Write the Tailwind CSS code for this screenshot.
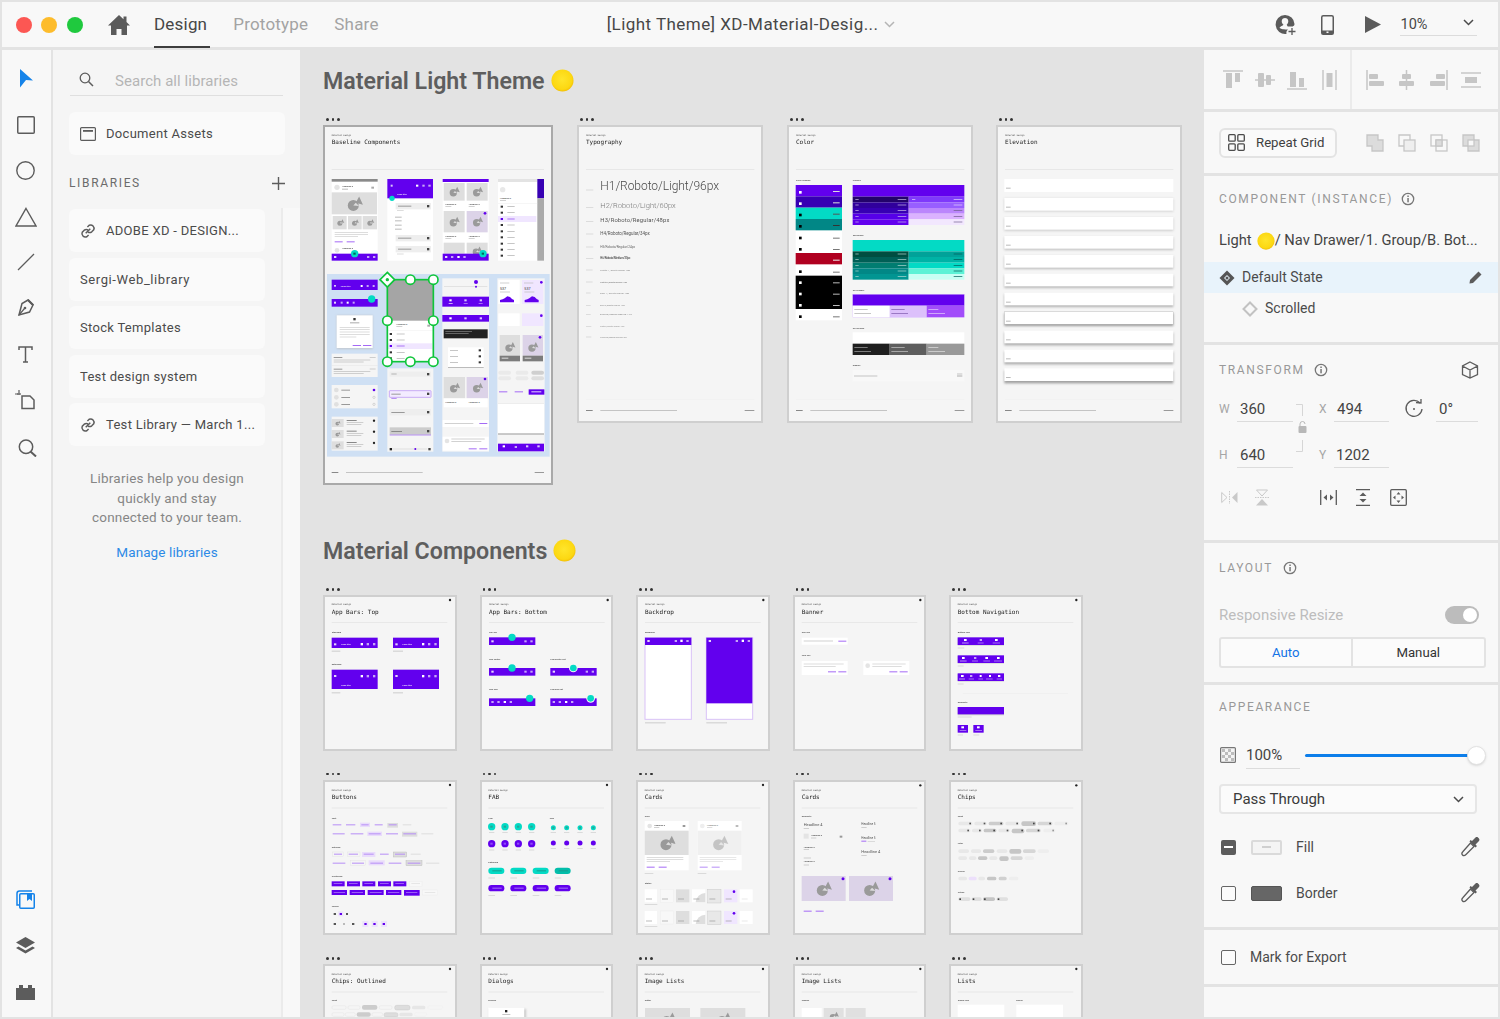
<!DOCTYPE html>
<html>
<head>
<meta charset="utf-8" />
<title>XD Material Design</title>
<script src="https://cdn.jsdelivr.net/npm/@tailwindcss/browser@4"></script>
</head>
<body class="m-0">

<!-- shared shapes for the artboard thumbnails -->
<svg class="absolute w-0 h-0">
  <defs>
    <radialGradient id="coin" cx="48%" cy="45%" r="60%">
      <stop offset="0" stop-color="#ffe52b" /><stop offset="0.75" stop-color="#fcd812" /><stop offset="1" stop-color="#efb400" />
    </radialGradient>
    <filter id="soft" x="-10%" y="-30%" width="120%" height="160%"><feGaussianBlur stdDeviation="2.5" /></filter>
    <symbol id="pic" viewBox="0 0 64 64">
      <circle cx="29" cy="38" r="16" fill="#9a9a9a" /><path d="M36 30 46 12 57 36z" fill="#9a9a9a" /><path d="M29 38 36 30 46 40z" fill="#dcdcdc" />
    </symbol>
    <symbol id="dropper" viewBox="0 0 20 20">
      <path d="M10.500 6 14 9.500 6 17.500c-1 1-2.500 1.500-3.500.5s-.5-2.500.5-3.500z" fill="none" stroke="#5c5c5c" stroke-width="1.300" />
      <path d="M9.500 4.500 15.500 10.500 17 9 15.500 7.500 19 4c1-1.500 0-2.500-.5-3s-1.500-1.500-3-.5L12 4 10.500 3z" fill="#5c5c5c" />
    </symbol>
    <symbol id="info" viewBox="0 0 14 14">
      <circle cx="7" cy="7" r="5.700" fill="none" stroke="#777" stroke-width="1.300" /><rect x="6.300" y="6" width="1.500" height="4.300" fill="#777" /><rect x="6.300" y="3.500" width="1.500" height="1.500" fill="#777" />
    </symbol>
    <symbol id="link" viewBox="1 1 14 14">
      <path d="M6 10 10 6M7.500 4.500l1.500-1.500a3 3 0 0 1 4 4l-1.700 1.700a3 3 0 0 1-3.300.3M8.500 11.500l-1.500 1.500a3 3 0 0 1-4-4l1.700-1.700a3 3 0 0 1 3.300-.3" fill="none" stroke="#5c5c5c" stroke-width="1.300" />
    </symbol>
  </defs>
</svg>

<div class="w-[1500px] h-[1019px] overflow-hidden bg-[#e3e3e3] p-[2px] flex flex-col font-['Roboto',sans-serif] text-[#4b4b4b]">

  <!-- header -->
  <header class="h-[45px] shrink-0 bg-[#f8f8f8] flex items-center pl-[14px]">
    <span class="w-4 h-4 rounded-full bg-[#fc5753]"></span>
    <span class="w-4 h-4 rounded-full bg-[#fdbc2c] ml-[9px]"></span>
    <span class="w-4 h-4 rounded-full bg-[#1fc93e] ml-[10px]"></span>
    <svg class="w-[22px] h-[20px] ml-[25px]" viewBox="0 0 22 20"><path d="M11 0 0 10.500h3V20h5.500v-6h5v6H19v-9.500h3l-3.500-3.400V1.500h-3v2.700z" fill="#5b5b5b" /></svg>
    <div class="relative h-full flex items-center text-[17px] tracking-[0.2px] ml-[24px] text-[#464646]">
      Design
      <span class="absolute left-0 right-[-3px] bottom-[-1px] h-[2px] bg-[#3d3d3d]"></span>
    </div>
    <span class="text-[17px] tracking-[0.2px] text-[#a3a3a3] ml-[26px]">Prototype</span>
    <span class="text-[17px] tracking-[0.2px] text-[#a3a3a3] ml-[26px]">Share</span>
    <span class="text-[17px] tracking-[0.45px] text-[#474747] ml-[228px]">[Light Theme] XD-Material-Desig...</span>
    <svg class="w-[11px] h-[7px] ml-[6px]" viewBox="0 0 11 7"><path d="M1 1l4.500 4.500L10 1" fill="none" stroke="#b5b5b5" stroke-width="1.500" /></svg>
    <svg class="w-[22px] h-[22px] ml-[380px]" viewBox="0 0 22 22">
      <path d="M10 1a9.500 9.500 0 1 0 1.500 18.900c-.4-2 .2-3.300 1.500-4.400-3.500 0-7.500-.3-8.500-1.700 1-2 3.200-1.500 4-3C7 9.500 6.500 8 6.800 6.500 7.300 4.700 8.500 4 10 4s2.800.7 3.200 2.500c.3 1.500-.2 3-1.500 4.300l1 1.700h5c.8-1 1.800-.5 1.800-2.500A9.500 9.500 0 0 0 10 1z" fill="#5b5b5b" />
      <path d="M17 14v7M13.500 17.500h7" stroke="#5b5b5b" stroke-width="1.300" />
    </svg>
    <svg class="w-[13px] h-[20px] ml-[24px]" viewBox="0 0 13 20"><rect x=".75" y=".75" width="11.500" height="18.500" rx="1.500" fill="none" stroke="#5b5b5b" stroke-width="1.500" /><rect x=".75" y="15.500" width="11.500" height="3.700" fill="#5b5b5b" /><rect x="5.500" y="16.500" width="2" height="1.500" fill="#f8f8f8" /></svg>
    <svg class="w-[16px] h-[17px] ml-[31px]" viewBox="0 0 16 17"><path d="M0 0 16 8.500 0 17z" fill="#5b5b5b" /></svg>
    <div class="relative w-[77px] h-[22px] ml-[19px] flex items-center text-[14.500px] text-[#474747]">
      10%
      <span class="absolute left-0 right-0 bottom-0 h-px bg-[#dcdcdc]"></span>
      <svg class="absolute right-[3px] top-[5px] w-[11px] h-[7px]" viewBox="0 0 11 7"><path d="M1 1l4.500 4.500L10 1" fill="none" stroke="#4b4b4b" stroke-width="1.500" /></svg>
    </div>
  </header>

  <div class="flex flex-1 min-h-0 mt-[3px]">

    <!-- tool rail -->
    <aside class="w-[49px] shrink-0 bg-[#f8f8f8] pr-[2px] flex flex-col items-center">
      <svg class="mt-[19px] w-[16px] h-[20px]" viewBox="0 0 16 20"><path d="M2 0 15 11.500 8 11 2 18.500z" fill="#1583e9" /></svg>
      <svg class="mt-[27px] w-[18px] h-[18px]" viewBox="0 0 18 18"><rect x=".75" y=".75" width="16.500" height="16.500" rx="1" fill="none" stroke="#5c5c5c" stroke-width="1.500" /></svg>
      <svg class="mt-[27px] w-[19px] h-[19px]" viewBox="0 0 19 19"><circle cx="9.500" cy="9.500" r="8.700" fill="none" stroke="#5c5c5c" stroke-width="1.400" /></svg>
      <svg class="mt-[27px] w-[22px] h-[20px]" viewBox="0 0 22 20"><path d="M11 1.500 21 19H1z" fill="none" stroke="#5c5c5c" stroke-width="1.400" /></svg>
      <svg class="mt-[26px] w-[18px] h-[18px]" viewBox="0 0 18 18"><path d="M1 17 17 1" stroke="#5c5c5c" stroke-width="1.300" /></svg>
      <svg class="mt-[27px] w-[19px] h-[19px]" viewBox="0 0 19 19"><path d="M12 2 17 7 13.500 14 3 17 6 5.500z" fill="none" stroke="#5c5c5c" stroke-width="1.500" /><path d="M12.500 1 18 6.500 16.500 8 11 2.500z" fill="#5c5c5c" /><path d="M3 17 8.500 10.500" stroke="#5c5c5c" stroke-width="1.200" /><circle cx="9" cy="10" r="1.300" fill="#5c5c5c" /></svg>
      <svg class="mt-[29px] w-[15px] h-[17px]" viewBox="0 0 15 17"><path d="M1 4V1h13v3M7.500 1v15M5 16h5" fill="none" stroke="#5c5c5c" stroke-width="1.500" /></svg>
      <svg class="mt-[27px] w-[21px] h-[20px]" viewBox="0 0 21 20"><path d="M7 6h8l4 4v8.500H7z" fill="none" stroke="#5c5c5c" stroke-width="1.500" /><path d="M0 4h5M4 0v3" stroke="#5c5c5c" stroke-width="1.200" /><path d="M2 4h4" stroke="#5c5c5c" stroke-width="1.200" /></svg>
      <svg class="mt-[29px] w-[19px] h-[18px] ml-[3px]" viewBox="0 0 19 18"><circle cx="8" cy="7.700" r="6.700" fill="none" stroke="#5c5c5c" stroke-width="1.500" /><path d="M12.500 12.500 18 17.500" stroke="#5c5c5c" stroke-width="2" /></svg>

      <svg class="mt-auto w-[19px] h-[19px]" viewBox="0 0 19 19"><path d="M3 15H1V3.500Q1 1 3.500 1H16" fill="none" stroke="#1583e9" stroke-width="1.500" /><rect x="3.750" y="3.750" width="14.500" height="14.500" rx="1" fill="none" stroke="#1583e9" stroke-width="1.500" /><path d="M11 4h5v7l-2.500-2L11 11z" fill="#1583e9" /></svg>
      <svg class="mt-[27px] w-[19px] h-[18px]" viewBox="0 0 19 18"><path d="M9.500 1 19 6.500 9.500 12 0 6.500z" fill="#5c5c5c" /><path d="M2.500 10.500 9.500 14.500 16.500 10.500 19 12 9.500 17.500 0 12z" fill="#5c5c5c" /></svg>
      <svg class="mt-[31px] mb-[17px] w-[19px] h-[15px]" viewBox="0 0 19 15"><path d="M0 3h3V0h4v3h5V0h4v3h3v12H0z" fill="#5c5c5c" /></svg>
    </aside>

    <!-- assets panel -->
    <aside class="w-[247px] shrink-0 ml-[2px] bg-[#f5f5f5] relative">
      <div class="absolute right-0 top-[158px] bottom-0 w-[19px] bg-[#f8f8f8] border-l-2 border-[#ebebeb]"></div>
      <div class="relative">
        <div class="mx-[17px] w-[213px] h-[46px] border-b border-[#dfdfdf] flex items-center pt-[17px] text-[15px] tracking-[0.05px] text-[#b5b5b5]">
          <svg class="w-[15px] h-[15px] ml-[9px] -mt-[3px]" viewBox="0 0 15 15"><circle cx="6" cy="6" r="4.800" fill="none" stroke="#5c5c5c" stroke-width="1.300" /><path d="M9.500 9.500 14 14" stroke="#5c5c5c" stroke-width="1.500" /></svg>
          <span class="ml-[21px]">Search all libraries</span>
        </div>
        <div class="mx-[16px] mt-[16px] h-[43px] w-[216px] rounded-md bg-[#fafafa] flex items-center pl-[11px] pt-px text-[13px] tracking-[0.3px]">
          <svg class="w-[16px] h-[14px]" viewBox="0 0 16 14"><rect x=".6" y=".6" width="14.800" height="12.800" rx="1" fill="none" stroke="#5c5c5c" stroke-width="1.200" /><rect x="3" y="3" width="10" height="1.800" fill="#5c5c5c" /></svg>
          <span class="ml-[10px]">Document Assets</span>
        </div>
        <div class="mx-[16px] mt-[19px] w-[216px] h-[18px] flex items-center justify-between text-[12px] tracking-[1.650px] text-[#6b6b6b]">
          LIBRARIES
          <svg class="w-[13px] h-[13px]" viewBox="0 0 13 13"><path d="M6.500 0v13M0 6.500h13" stroke="#5c5c5c" stroke-width="1.400" /></svg>
        </div>
        <div class="mx-[16px] mt-[17px] w-[196px] flex flex-col gap-[5.500px] text-[13px] tracking-[0.3px]">
          <div class="h-[43px] rounded-md bg-[#fafafa] flex items-center pl-[11px] pt-px"><svg class="w-[16px] h-[16px] mr-[10px]"><use href="#link" /></svg>ADOBE XD - DESIGN...</div>
          <div class="h-[43px] rounded-md bg-[#fafafa] flex items-center pl-[11px] pt-px tracking-[0.6px]">Sergi-Web_library</div>
          <div class="h-[43px] rounded-md bg-[#fafafa] flex items-center pl-[11px] pt-px">Stock Templates</div>
          <div class="h-[43px] rounded-md bg-[#fafafa] flex items-center pl-[11px] pt-px">Test design system</div>
          <div class="h-[43px] rounded-md bg-[#fafafa] flex items-center pl-[11px] pt-px"><svg class="w-[16px] h-[16px] mr-[10px]"><use href="#link" /></svg>Test Library — March 1...</div>
        </div>
        <p class="mx-[16px] w-[196px] mt-[23px] text-center text-[13.500px] leading-[19.500px] tracking-[0.2px] text-[#868686]">Libraries help you design<br />quickly and stay<br />connected to your team.</p>
        <p class="mx-[16px] w-[196px] mt-[14px] text-center text-[13.500px] tracking-[0.1px] text-[#2d8ae6]">Manage libraries</p>
      </div>
    </aside>

    <!-- canvas -->
    <main class="w-[904px] shrink-0 overflow-hidden pl-[23px]">
      <div class="h-[75px] pt-[16px]">
        <h1 class="flex items-center h-[30px] text-[23.200px] font-semibold text-[#5e5e5e] whitespace-nowrap">Material Light Theme<svg class="w-[23px] h-[23px] ml-[6px] -mt-[2px]" viewBox="0 0 24 24"><circle cx="12" cy="12" r="11.500" fill="url(#coin)" /></svg></h1>
      </div>

      <div class="flex items-start gap-[24px] h-[360px]">

        <!-- baseline components -->
        <div class="relative w-[230px] h-[360px] bg-[#f5f5f5] border-2 border-[#a9a9a9] box-border">
          <span class="absolute -top-[9px] left-px flex gap-[3px]"><i class="w-[2.500px] h-[2.500px] rounded-full bg-[#333]"></i><i class="w-[2.500px] h-[2.500px] rounded-full bg-[#333]"></i><i class="w-[2.500px] h-[2.500px] rounded-full bg-[#333]"></i></span>
          <svg class="absolute inset-[-2px] w-[230px] h-[360px] blur-[0.3px]" viewBox="25 45 690 1080" font-family="Roboto">
            <text x="51" y="78" font-size="6.500" fill="#444" font-family="DejaVu Sans Mono">Material Design</text>
            <text x="51" y="102" font-size="18" fill="#222" font-family="DejaVu Sans Mono">Baseline Components</text>
            <rect x="51" y="177" width="637" height="2" fill="#e0e0e0" />
            <!-- phone 1 -->
            <rect x="51" y="207" width="138" height="245" fill="#fff" /><rect x="51" y="207" width="138" height="8" fill="#8a8a8a" />
            <circle cx="67" cy="232" r="8" fill="#e4e4e4" /><text x="82" y="231" font-size="7" font-weight="500" fill="#444">Headline 6</text><rect x="82" y="236" width="18" height="3" fill="#bbb" /><rect x="170" y="230" width="8" height="6" fill="#aaa" />
            <rect x="51" y="247" width="136" height="66" fill="#dedede" /><use href="#pic" x="86" y="247" width="66" height="66" />
            <rect x="54" y="318" width="42" height="40" fill="#dedede" /><use href="#pic" x="62" y="322" width="30" height="30" /><rect x="100" y="318" width="41" height="40" fill="#dedede" /><use href="#pic" x="106" y="322" width="30" height="30" /><rect x="144" y="318" width="43" height="40" fill="#dedede" /><use href="#pic" x="152" y="322" width="30" height="30" />
            <rect x="60" y="366" width="100" height="2" fill="#ccc" /><rect x="60" y="372" width="100" height="2" fill="#ccc" /><rect x="60" y="378" width="70" height="2" fill="#ccc" />
            <rect x="60" y="394" width="24" height="3" fill="#a46af5" /><rect x="96" y="394" width="24" height="3" fill="#a46af5" />
            <circle cx="67" cy="421" r="7" fill="#e4e4e4" /><text x="82" y="417" font-size="7" font-weight="500" fill="#444">Headline 6</text>
            <rect x="51" y="431" width="138" height="21" fill="#6200ee" /><circle cx="120" cy="431" r="11" fill="#03dac5" /><rect x="116" y="428" width="7" height="6" fill="#00665c" /><rect x="58" y="438" width="7" height="6" fill="#e6d7fb" /><rect x="157" y="438" width="7" height="6" fill="#c6a6f7" /><rect x="175" y="438" width="7" height="6" fill="#c6a6f7" />
            <!-- phone 2 -->
            <rect x="218" y="207" width="137" height="245" fill="#fff" /><rect x="218" y="207" width="137" height="58" fill="#6200ee" /><circle cx="232" cy="265" r="8" fill="#03dac5" /><rect x="228" y="224" width="6" height="6" fill="#dcc6fb" /><rect x="304" y="224" width="7" height="6" fill="#fff" /><rect x="323" y="224" width="7" height="6" fill="#c6a6f7" /><rect x="341" y="224" width="7" height="6" fill="#c6a6f7" />
            <text x="247" y="256" font-size="7" fill="#fff">Page title</text>
            <rect x="243" y="279" width="106" height="19" fill="#eee" /><rect x="250" y="287" width="40" height="3" fill="#999" /><rect x="337" y="285" width="7" height="7" fill="#444" /><rect x="247" y="301" width="20" height="2" fill="#ccc" />
            <rect x="241" y="320" width="20" height="3" fill="#bbb" /><rect x="241" y="331" width="20" height="3" fill="#bbb" /><rect x="241" y="344" width="20" height="3" fill="#bbb" /><rect x="241" y="356" width="20" height="3" fill="#bbb" />
            <rect x="243" y="375" width="106" height="19" fill="#eee" /><rect x="250" y="383" width="40" height="3" fill="#999" /><rect x="337" y="381" width="7" height="7" fill="#444" />
            <rect x="243" y="408" width="106" height="19" fill="#eee" /><rect x="250" y="416" width="40" height="3" fill="#999" /><rect x="337" y="414" width="7" height="7" fill="#444" /><rect x="247" y="431" width="20" height="2" fill="#ccc" />
            <!-- phone 3 -->
            <rect x="384" y="207" width="138" height="245" fill="#fff" /><rect x="384" y="207" width="138" height="9" fill="#6200ee" />
            <rect x="387" y="219" width="63" height="53" fill="#dedede" /><use href="#pic" x="396" y="222" width="44" height="44" /><rect x="456" y="219" width="63" height="53" fill="#dedede" /><use href="#pic" x="466" y="222" width="44" height="44" />
            <text x="392" y="284" font-size="7" font-weight="500" fill="#444">Headline 6</text><text x="462" y="284" font-size="7" font-weight="500" fill="#444">Headline 6</text><rect x="392" y="289" width="18" height="2" fill="#bbb" /><rect x="462" y="289" width="18" height="2" fill="#bbb" />
            <rect x="387" y="303" width="63" height="64" fill="#dedede" /><use href="#pic" x="396" y="312" width="44" height="44" /><rect x="456" y="303" width="63" height="64" fill="#dcd3e8" /><use href="#pic" x="466" y="312" width="44" height="44" /><circle cx="511" cy="310" r="4" fill="#6200ee" />
            <text x="392" y="380" font-size="7" font-weight="500" fill="#444">Headline 6</text><text x="462" y="380" font-size="7" font-weight="500" fill="#444">Headline 6</text><rect x="392" y="385" width="18" height="2" fill="#bbb" /><rect x="462" y="385" width="18" height="2" fill="#bbb" />
            <rect x="387" y="398" width="63" height="33" fill="#dedede" /><rect x="456" y="398" width="63" height="33" fill="#dedede" /><use href="#pic" x="466" y="402" width="40" height="40" />
            <rect x="384" y="431" width="138" height="21" fill="#6200ee" /><circle cx="505" cy="431" r="11" fill="#03dac5" /><rect x="501" y="428" width="7" height="6" fill="#00665c" /><rect x="391" y="438" width="7" height="6" fill="#e6d7fb" /><rect x="409" y="438" width="7" height="6" fill="#c6a6f7" /><rect x="428" y="438" width="7" height="6" fill="#fff" /><rect x="446" y="438" width="7" height="6" fill="#c6a6f7" />
            <!-- phone 4 -->
            <rect x="550" y="207" width="118" height="245" fill="#fff" /><rect x="550" y="207" width="118" height="9" fill="#e3e3e3" /><rect x="668" y="207" width="20" height="58" fill="#3700b3" /><rect x="668" y="265" width="20" height="187" fill="#aaa" />
            <circle cx="564" cy="239" r="8" fill="#e8e8e8" /><text x="556" y="266" font-size="7" font-weight="500" fill="#444">Headline 6</text><rect x="556" y="270" width="18" height="2" fill="#bbb" /><rect x="550" y="280" width="118" height="1" fill="#e5e5e5" />
            <rect x="550" y="318" width="115" height="18" fill="#f0e6ff" />
            <rect x="558" y="287" width="7" height="6" fill="#333" /><rect x="578" y="289" width="22" height="2" fill="#aaa" /><rect x="558" y="305" width="7" height="6" fill="#333" /><rect x="578" y="307" width="22" height="2" fill="#aaa" /><rect x="558" y="324" width="7" height="6" fill="#6200ee" /><rect x="578" y="326" width="22" height="2" fill="#8b3ff0" /><rect x="558" y="342" width="7" height="6" fill="#333" /><rect x="578" y="344" width="22" height="2" fill="#aaa" /><rect x="558" y="361" width="7" height="6" fill="#333" /><rect x="578" y="363" width="22" height="2" fill="#aaa" /><rect x="558" y="379" width="7" height="6" fill="#333" /><rect x="578" y="381" width="22" height="2" fill="#aaa" /><rect x="558" y="398" width="7" height="6" fill="#333" /><rect x="578" y="400" width="22" height="2" fill="#aaa" /><rect x="558" y="416" width="7" height="6" fill="#333" /><rect x="578" y="418" width="22" height="2" fill="#aaa" /><rect x="558" y="434" width="7" height="6" fill="#333" /><rect x="578" y="436" width="22" height="2" fill="#aaa" />
            <!-- selected group -->
            <rect x="37" y="492" width="668" height="548" fill="#cfe0f4" />
            <rect x="51" y="509" width="138" height="31" fill="#6200ee" /><rect x="58" y="525" width="6" height="5" fill="#dcc6fb" /><text x="78" y="531" font-size="7" fill="#fff">Page title</text><rect x="138" y="525" width="6" height="6" fill="#fff" /><rect x="156" y="525" width="6" height="6" fill="#c6a6f7" /><rect x="174" y="525" width="6" height="6" fill="#c6a6f7" />
            <rect x="51" y="567" width="138" height="23" fill="#6200ee" /><circle cx="171" cy="567" r="11" fill="#03dac5" /><rect x="58" y="575" width="6" height="6" fill="#e6d7fb" /><rect x="78" y="575" width="6" height="6" fill="#c6a6f7" /><rect x="96" y="575" width="6" height="6" fill="#fff" /><rect x="114" y="575" width="6" height="6" fill="#c6a6f7" />
            <rect x="66" y="616" width="108" height="101" fill="#bbb" opacity=".7" filter="url(#soft)" /><rect x="66" y="616" width="108" height="98" fill="#fff" /><rect x="116" y="624" width="7" height="7" fill="#333" /><rect x="106" y="637" width="28" height="3" fill="#aaa" /><rect x="75" y="651" width="90" height="2" fill="#ccc" /><rect x="75" y="658" width="90" height="2" fill="#ccc" /><rect x="75" y="665" width="90" height="2" fill="#ccc" /><rect x="75" y="672" width="90" height="2" fill="#ccc" /><rect x="75" y="680" width="50" height="2" fill="#ccc" /><rect x="114" y="705" width="25" height="3" fill="#a46af5" /><rect x="145" y="705" width="25" height="3" fill="#a46af5" />
            <rect x="51" y="731" width="138" height="70" fill="#f5f5f5" /><rect x="57" y="741" width="26" height="3" fill="#999" /><rect x="165" y="741" width="18" height="2" fill="#bbb" /><rect x="57" y="749" width="110" height="2" fill="#bbb" /><rect x="57" y="755" width="90" height="2" fill="#bbb" /><rect x="51" y="765" width="138" height="1" fill="#ddd" /><rect x="57" y="776" width="26" height="3" fill="#999" /><rect x="165" y="776" width="18" height="2" fill="#bbb" /><rect x="57" y="784" width="110" height="2" fill="#bbb" /><rect x="57" y="790" width="90" height="2" fill="#bbb" />
            <rect x="51" y="825" width="138" height="70" fill="#f5f5f5" /><circle cx="65" cy="840" r="7" fill="#e0e0e0" /><rect x="80" y="839" width="26" height="3" fill="#999" /><circle cx="178" cy="840" r="4" fill="#6200ee" /><circle cx="65" cy="862" r="7" fill="#e0e0e0" /><rect x="80" y="861" width="26" height="3" fill="#999" /><circle cx="178" cy="862" r="3.500" fill="none" stroke="#999" /><circle cx="65" cy="883" r="7" fill="#e0e0e0" /><rect x="80" y="882" width="26" height="3" fill="#999" /><circle cx="178" cy="883" r="3.500" fill="none" stroke="#999" />
            <rect x="51" y="920" width="138" height="102" fill="#f5f5f5" /><rect x="51" y="927" width="36" height="24" fill="#dedede" /><use href="#pic" x="58" y="928" width="22" height="22" /><rect x="96" y="930" width="30" height="3" fill="#888" /><rect x="96" y="937" width="50" height="2" fill="#bbb" /><rect x="96" y="943" width="44" height="2" fill="#bbb" /><circle cx="178" cy="932" r="3.500" fill="#222" />
            <rect x="51" y="960" width="36" height="24" fill="#dedede" /><use href="#pic" x="58" y="961" width="22" height="22" /><rect x="96" y="962" width="30" height="3" fill="#888" /><rect x="96" y="969" width="50" height="2" fill="#bbb" /><rect x="96" y="975" width="44" height="2" fill="#bbb" /><circle cx="178" cy="965" r="3.500" fill="#222" />
            <rect x="51" y="994" width="36" height="24" fill="#dedede" /><use href="#pic" x="58" y="995" width="22" height="22" /><rect x="96" y="996" width="30" height="3" fill="#888" /><rect x="96" y="1003" width="50" height="2" fill="#bbb" /><rect x="96" y="1009" width="44" height="2" fill="#bbb" /><circle cx="178" cy="999" r="3.500" fill="#222" />
            <!-- col 2 below the selection -->
            <rect x="218" y="775" width="138" height="250" fill="#f5f5f5" />
            <rect x="225" y="785" width="124" height="15" fill="#eee" /><rect x="230" y="791" width="16" height="2" fill="#999" /><rect x="337" y="789" width="7" height="7" fill="#444" />
            <rect x="224" y="842" width="125" height="20" rx="2" fill="#f3ebff" stroke="#b48af5" stroke-width="2" /><rect x="230" y="851" width="28" height="3" fill="#999" /><rect x="337" y="848" width="7" height="7" fill="#444" /><rect x="230" y="865" width="16" height="2" fill="#9a5ff2" />
            <rect x="225" y="897" width="124" height="19" fill="#eee" /><rect x="230" y="906" width="40" height="3" fill="#999" /><rect x="337" y="903" width="7" height="7" fill="#444" />
            <rect x="225" y="952" width="124" height="22" fill="#ccc" /><rect x="230" y="963" width="32" height="3" fill="#888" /><rect x="337" y="960" width="7" height="7" fill="#444" /><rect x="225" y="974" width="124" height="2" fill="#9a5ff2" />
            <rect x="230" y="1016" width="108" height="2" fill="#d6d6d6" /><rect x="225" y="1014" width="7" height="7" fill="#222" /><circle cx="302" cy="1017" r="3" fill="#6200ee" /><rect x="341" y="1014" width="7" height="7" fill="#444" />
            <!-- col 3 -->
            <rect x="383" y="505" width="140" height="520" fill="#f5f5f5" />
            <rect x="388" y="529" width="130" height="2" fill="#d8d8d8" /><circle cx="484" cy="516" r="6" fill="#6200ee" /><circle cx="484" cy="530" r="3" fill="#6200ee" />
            <rect x="383" y="560" width="140" height="30" fill="#6200ee" /><rect x="404" y="568" width="7" height="6" fill="#fff" /><rect x="449" y="568" width="7" height="6" fill="#dcc6fb" /><rect x="495" y="568" width="7" height="6" fill="#dcc6fb" /><rect x="402" y="579" width="12" height="2" fill="#fff" /><rect x="447" y="579" width="12" height="2" fill="#c6a6f7" /><rect x="492" y="579" width="12" height="2" fill="#c6a6f7" />
            <rect x="383" y="615" width="140" height="20" fill="#6200ee" /><rect x="404" y="622" width="7" height="6" fill="#fff" /><rect x="449" y="622" width="7" height="6" fill="#dcc6fb" /><rect x="495" y="622" width="7" height="6" fill="#dcc6fb" />
            <rect x="387" y="658" width="132" height="27" fill="#222" /><rect x="392" y="663" width="80" height="2" fill="#888" /><rect x="392" y="670" width="70" height="2" fill="#888" />
            <rect x="400" y="712" width="107" height="61" fill="#fff" /><rect x="400" y="771" width="107" height="3" fill="#bbb" /><rect x="406" y="720" width="24" height="2" fill="#aaa" /><rect x="406" y="738" width="24" height="2" fill="#aaa" /><rect x="406" y="756" width="24" height="2" fill="#aaa" /><rect x="492" y="718" width="7" height="6" fill="#333" /><rect x="492" y="736" width="7" height="6" fill="#333" /><rect x="492" y="754" width="7" height="6" fill="#333" />
            <rect x="387" y="801" width="64" height="64" fill="#dedede" /><use href="#pic" x="397" y="810" width="44" height="44" /><rect x="456" y="801" width="64" height="64" fill="#dcd3e8" /><use href="#pic" x="466" y="810" width="44" height="44" /><circle cx="511" cy="807" r="4" fill="#6200ee" /><rect x="387" y="865" width="132" height="27" fill="#fff" /><text x="392" y="878" font-size="7" font-weight="500" fill="#444">Headline 6</text><text x="462" y="878" font-size="7" font-weight="500" fill="#444">Headline 6</text>
            <rect x="384" y="930" width="138" height="21" fill="#fff" /><rect x="390" y="939" width="86" height="2" fill="#bbb" /><rect x="494" y="939" width="24" height="3" fill="#a46af5" />
            <rect x="384" y="980" width="138" height="42" fill="#fff" /><circle cx="397" cy="993" r="7" fill="#e4e4e4" /><rect x="410" y="986" width="100" height="2" fill="#bbb" /><rect x="410" y="993" width="90" height="2" fill="#bbb" /><rect x="462" y="1015" width="24" height="3" fill="#a46af5" /><rect x="494" y="1015" width="24" height="3" fill="#a46af5" />
            <!-- col 4 -->
            <rect x="548" y="505" width="142" height="520" fill="#f5f5f5" />
            <rect x="551" y="510" width="64" height="72" fill="#fff" /><rect x="556" y="518" width="28" height="2" fill="#bbb" /><text x="556" y="539" font-size="11" fill="#333">537</text><rect x="556" y="545" width="30" height="2" fill="#bbb" /><path d="M556 577V570l8-2 6-3 8-6 8 2 6 6 6 3v7z" fill="#6200ee" />
            <rect x="622" y="510" width="64" height="72" fill="#f0e6ff" /><rect x="628" y="518" width="28" height="2" fill="#bbb" /><text x="629" y="539" font-size="11" fill="#333">537</text><rect x="629" y="545" width="30" height="2" fill="#bbb" /><path d="M630 577V570l8-2 6-3 8-6 8 2 6 6 6 3v7z" fill="#6200ee" /><circle cx="680" cy="517" r="4" fill="#6200ee" />
            <rect x="551" y="610" width="64" height="38" fill="#fff" /><rect x="622" y="610" width="64" height="38" fill="#f0e6ff" /><circle cx="680" cy="617" r="4" fill="#6200ee" />
            <rect x="555" y="675" width="61" height="62" fill="#dedede" /><use href="#pic" x="563" y="688" width="44" height="44" /><rect x="555" y="737" width="61" height="17" fill="#7c7c7c" /><rect x="624" y="675" width="61" height="62" fill="#dcd3e8" /><use href="#pic" x="632" y="688" width="44" height="44" /><rect x="624" y="737" width="61" height="17" fill="#7c7c7c" /><circle cx="676" cy="682" r="4" fill="#6200ee" /><rect x="561" y="743" width="20" height="3" fill="#ddd" /><rect x="630" y="743" width="20" height="3" fill="#ddd" />
            <rect x="551" y="782" width="38" height="12" rx="6" fill="#eaeaea" /><rect x="603" y="782" width="38" height="12" rx="6" fill="#eaeaea" /><rect x="650" y="782" width="38" height="12" rx="6" fill="#cfcfcf" /><rect x="551" y="799" width="38" height="12" rx="6" fill="#eaeaea" /><rect x="603" y="799" width="38" height="12" rx="6" fill="#eaeaea" /><rect x="650" y="799" width="38" height="12" rx="6" fill="#dedede" />
            <rect x="553" y="844" width="25" height="3" fill="#a46af5" /><rect x="600" y="844" width="25" height="3" fill="#a46af5" /><rect x="642" y="838" width="47" height="16" fill="#6200ee" /><rect x="650" y="844" width="30" height="3" fill="#e6d7fb" />
            <rect x="550" y="880" width="138" height="94" fill="#b0b0b0" /><rect x="550" y="880" width="138" height="90" fill="#fff" />
            <rect x="550" y="1001" width="138" height="23" fill="#6200ee" /><rect x="564" y="1006" width="7" height="6" fill="#fff" /><rect x="600" y="1008" width="7" height="6" fill="#c6a6f7" /><rect x="634" y="1006" width="7" height="6" fill="#dcc6fb" /><rect x="668" y="1006" width="7" height="6" fill="#dcc6fb" />
            <!-- selected element frame -->
            <rect x="218" y="509" width="138" height="246" fill="#fff" /><rect x="218" y="509" width="138" height="123" fill="#a5a5a5" />
            <text x="245" y="645" font-size="7" font-weight="500" fill="#444">Headline 6</text><rect x="245" y="649" width="18" height="2" fill="#bbb" /><rect x="338" y="644" width="8" height="6" fill="#aaa" />
            <rect x="218" y="660" width="138" height="1" fill="#e5e5e5" />
            <rect x="218" y="700" width="135" height="17" fill="#f0e6ff" />
            <rect x="225" y="669" width="7" height="6" fill="#333" /><rect x="246" y="671" width="24" height="2" fill="#aaa" /><rect x="225" y="687" width="7" height="6" fill="#333" /><rect x="246" y="689" width="24" height="2" fill="#aaa" /><rect x="225" y="705" width="7" height="6" fill="#6200ee" /><rect x="246" y="707" width="24" height="2" fill="#8b3ff0" /><rect x="225" y="724" width="7" height="6" fill="#333" /><rect x="246" y="726" width="24" height="2" fill="#aaa" /><rect x="225" y="742" width="7" height="6" fill="#333" /><rect x="246" y="744" width="24" height="2" fill="#aaa" />
            <rect x="218" y="509" width="138" height="246" fill="none" stroke="#0ec53a" stroke-width="5" />
            <circle cx="287" cy="509" r="14" fill="#fff" stroke="#0ec53a" stroke-width="5" /><circle cx="356" cy="509" r="14" fill="#fff" stroke="#0ec53a" stroke-width="5" /><circle cx="218" cy="632" r="14" fill="#fff" stroke="#0ec53a" stroke-width="5" /><circle cx="356" cy="632" r="14" fill="#fff" stroke="#0ec53a" stroke-width="5" /><circle cx="218" cy="755" r="14" fill="#fff" stroke="#0ec53a" stroke-width="5" /><circle cx="287" cy="755" r="14" fill="#fff" stroke="#0ec53a" stroke-width="5" /><circle cx="356" cy="755" r="14" fill="#fff" stroke="#0ec53a" stroke-width="5" />
            <path d="M218 487 240 509 218 531 196 509z" fill="#fff" stroke="#0ec53a" stroke-width="5" /><circle cx="218" cy="509" r="5" fill="#0ec53a" />
            <!-- footer -->
            <rect x="51" y="1086" width="20" height="3" fill="#888" /><rect x="94" y="1086" width="230" height="3" fill="#c4c4c4" /><rect x="660" y="1086" width="28" height="3" fill="#999" />
          </svg>
        </div>

        <!-- typography -->
        <div class="relative w-[186px] h-[298px] bg-[#f5f5f5] border-2 border-[#cfcfcf]">
          <span class="absolute -top-[9px] left-px flex gap-[3px]"><i class="w-[2.500px] h-[2.500px] rounded-full bg-[#333]"></i><i class="w-[2.500px] h-[2.500px] rounded-full bg-[#333]"></i><i class="w-[2.500px] h-[2.500px] rounded-full bg-[#333]"></i></span>
          <svg class="absolute inset-[-2px] w-[186px] h-[298px] blur-[0.3px]" viewBox="0 0 558 894" font-family="Roboto">
            <text x="27" y="33" font-size="6.500" fill="#444" font-family="DejaVu Sans Mono">Material Design</text>
            <text x="27" y="56" font-size="18" fill="#222" font-family="DejaVu Sans Mono">Typography</text>
            <rect x="27" y="132" width="505" height="2" fill="#e0e0e0" />
            <text x="70" y="195" font-size="36" font-weight="300" fill="#4a4a4a" textLength="356">H1/Roboto/Light/96px</text>
            <text x="70" y="248" font-size="22.500" font-weight="300" fill="#777" textLength="226">H2/Roboto/Light/60px</text>
            <text x="70" y="290" font-size="17.500" fill="#555" textLength="207">H3/Roboto/Regular/48px</text>
            <text x="70" y="329" font-size="13.500" fill="#555" textLength="148">H4/Roboto/Regular/34px</text>
            <text x="70" y="368" font-size="9.400" fill="#666" textLength="104">H5/Roboto/Regular/24px</text>
            <text x="70" y="402" font-size="8.200" font-weight="500" fill="#444" textLength="90">H6/Roboto/Medium/20px</text>
            <text x="70" y="437" font-size="5.500" fill="#777" textLength="89">Subtitle 1 / Roboto Regular 16px</text>
            <text x="70" y="473" font-size="5.500" fill="#666" textLength="80">Subtitle 2/Roboto Medium 14px</text>
            <text x="70" y="506" font-size="5.500" fill="#777" textLength="86">Body 1 / Roboto Regular 16px</text>
            <text x="70" y="543" font-size="5" fill="#777" textLength="73">Body 2/Roboto Regular 14px</text>
            <text x="70" y="571" font-size="5" fill="#666" textLength="95">BUTTON/ROBOTO MEDIUM 14PX</text>
            <text x="70" y="606" font-size="5" fill="#888" textLength="72">Caption/Roboto Regular 12px</text>
            <text x="70" y="638" font-size="5" fill="#888" textLength="80">OVERLINE/ROBOTO REGULAR 10PX</text>
            <rect x="27" y="194" width="22" height="2" fill="#d0d0d0" /><rect x="27" y="246" width="22" height="2" fill="#d0d0d0" /><rect x="27" y="288" width="22" height="2" fill="#d0d0d0" /><rect x="27" y="326" width="22" height="2" fill="#d0d0d0" /><rect x="27" y="365" width="22" height="2" fill="#d0d0d0" /><rect x="27" y="399" width="22" height="2" fill="#d0d0d0" /><rect x="27" y="434" width="20" height="2" fill="#d0d0d0" /><rect x="27" y="470" width="20" height="2" fill="#d0d0d0" /><rect x="27" y="503" width="14" height="2" fill="#d0d0d0" /><rect x="27" y="540" width="14" height="2" fill="#d0d0d0" /><rect x="27" y="568" width="14" height="2" fill="#d0d0d0" /><rect x="27" y="603" width="16" height="2" fill="#d0d0d0" /><rect x="27" y="635" width="16" height="2" fill="#d0d0d0" />
            <rect x="27" y="822" width="505" height="1" fill="#ededed" />
            <rect x="27" y="855" width="20" height="3" fill="#888" /><rect x="70" y="855" width="230" height="3" fill="#c4c4c4" /><rect x="503" y="855" width="29" height="3" fill="#999" />
          </svg>
        </div>

        <!-- color -->
        <div class="relative w-[186px] h-[298px] bg-[#f5f5f5] border-2 border-[#cfcfcf]">
          <span class="absolute -top-[9px] left-px flex gap-[3px]"><i class="w-[2.500px] h-[2.500px] rounded-full bg-[#333]"></i><i class="w-[2.500px] h-[2.500px] rounded-full bg-[#333]"></i><i class="w-[2.500px] h-[2.500px] rounded-full bg-[#333]"></i></span>
          <svg class="absolute inset-[-2px] w-[186px] h-[298px] blur-[0.3px]" viewBox="0 0 558 894" font-family="Roboto">
            <text x="27" y="33" font-size="6.500" fill="#444" font-family="DejaVu Sans Mono">Material Design</text>
            <text x="27" y="56" font-size="18" fill="#222" font-family="DejaVu Sans Mono">Color</text>
            <rect x="27" y="132" width="505" height="2" fill="#e0e0e0" />
            <text x="27" y="168" font-size="7" font-weight="500" fill="#444">Color Scheme</text>
            <rect x="26" y="180" width="139" height="406" fill="#fff" />
            <rect x="26" y="180" width="139" height="34" fill="#6200ee" /><rect x="26" y="214" width="139" height="34" fill="#3700b3" /><rect x="26" y="248" width="139" height="34" fill="#03dac5" /><rect x="26" y="282" width="139" height="34" fill="#018786" /><rect x="26" y="384" width="139" height="34" fill="#b00020" /><rect x="26" y="452" width="139" height="100" fill="#000" />
            <rect x="36" y="198" width="8" height="8" fill="#fff" /><rect x="36" y="232" width="8" height="8" fill="#fff" /><rect x="36" y="266" width="8" height="8" fill="#000" /><rect x="36" y="300" width="8" height="8" fill="#000" /><rect x="36" y="335" width="8" height="8" fill="#000" /><rect x="36" y="369" width="8" height="8" fill="#000" /><rect x="36" y="436" width="8" height="8" fill="#000" /><rect x="36" y="469" width="8" height="8" fill="#fff" /><rect x="36" y="503" width="8" height="8" fill="#fff" /><rect x="36" y="537" width="8" height="8" fill="#fff" /><rect x="36" y="571" width="8" height="8" fill="#000" />
            <rect x="138" y="198" width="20" height="3" fill="#ddd" /><rect x="138" y="232" width="20" height="3" fill="#ddd" /><rect x="138" y="266" width="20" height="3" fill="#555" /><rect x="138" y="300" width="20" height="3" fill="#333" /><rect x="138" y="338" width="20" height="3" fill="#777" /><rect x="138" y="372" width="20" height="3" fill="#777" /><rect x="138" y="404" width="20" height="3" fill="#eee" /><rect x="138" y="440" width="20" height="3" fill="#777" /><rect x="138" y="472" width="20" height="3" fill="#bbb" /><rect x="138" y="506" width="20" height="3" fill="#bbb" /><rect x="138" y="540" width="20" height="3" fill="#bbb" /><rect x="138" y="574" width="20" height="3" fill="#777" />
            <text x="197" y="168" font-size="7" font-weight="500" fill="#444">Primary</text>
            <rect x="197" y="180" width="335" height="35" fill="#6200ee" /><rect x="197" y="215" width="168" height="17" fill="#23036a" /><rect x="197" y="232" width="168" height="17" fill="#30009c" /><rect x="197" y="249" width="168" height="17" fill="#3700b3" /><rect x="197" y="266" width="168" height="17" fill="#5600e8" /><rect x="197" y="283" width="168" height="17" fill="#6200ee" /><rect x="365" y="215" width="167" height="17" fill="#7f39fb" /><rect x="365" y="232" width="167" height="17" fill="#985eff" /><rect x="365" y="249" width="167" height="17" fill="#bb86fc" /><rect x="365" y="266" width="167" height="17" fill="#dbb2ff" /><rect x="365" y="283" width="167" height="17" fill="#f2e7fe" />
            <rect x="205" y="222" width="10" height="2" fill="#cfc3e8" /><rect x="205" y="239" width="10" height="2" fill="#cfc3e8" /><rect x="205" y="256" width="10" height="2" fill="#cfc3e8" /><rect x="205" y="273" width="10" height="2" fill="#cfc3e8" /><rect x="205" y="290" width="10" height="2" fill="#cfc3e8" /><rect x="332" y="222" width="26" height="2" fill="#cfc3e8" /><rect x="332" y="239" width="26" height="2" fill="#cfc3e8" /><rect x="332" y="256" width="26" height="2" fill="#cfc3e8" /><rect x="332" y="273" width="26" height="2" fill="#cfc3e8" /><rect x="332" y="290" width="26" height="2" fill="#cfc3e8" /><rect x="375" y="222" width="10" height="2" fill="#e6dcfb" /><rect x="500" y="222" width="26" height="2" fill="#e6dcfb" /><rect x="500" y="239" width="26" height="2" fill="#e6dcfb" /><rect x="500" y="256" width="26" height="2" fill="#6c5a8a" /><rect x="500" y="273" width="26" height="2" fill="#6c5a8a" /><rect x="500" y="290" width="26" height="2" fill="#6c5a8a" />
            <text x="197" y="333" font-size="7" font-weight="500" fill="#444">Secondary</text>
            <rect x="197" y="345" width="335" height="34" fill="#03dac5" /><rect x="197" y="379" width="168" height="17" fill="#004d40" /><rect x="197" y="396" width="168" height="17" fill="#005f56" /><rect x="197" y="413" width="168" height="17" fill="#007d71" /><rect x="197" y="430" width="168" height="17" fill="#018786" /><rect x="197" y="447" width="168" height="17" fill="#019592" /><rect x="365" y="379" width="167" height="17" fill="#01a299" /><rect x="365" y="396" width="167" height="17" fill="#00b3a6" /><rect x="365" y="413" width="167" height="17" fill="#03dac5" /><rect x="365" y="430" width="167" height="17" fill="#5df2d6" /><rect x="365" y="447" width="167" height="17" fill="#c8fff4" />
            <rect x="205" y="386" width="10" height="2" fill="#b9dcd6" /><rect x="205" y="403" width="10" height="2" fill="#b9dcd6" /><rect x="205" y="420" width="10" height="2" fill="#b9dcd6" /><rect x="205" y="437" width="10" height="2" fill="#b9dcd6" /><rect x="205" y="454" width="10" height="2" fill="#b9dcd6" /><rect x="332" y="386" width="26" height="2" fill="#b9dcd6" /><rect x="332" y="403" width="26" height="2" fill="#b9dcd6" /><rect x="332" y="420" width="26" height="2" fill="#b9dcd6" /><rect x="332" y="437" width="26" height="2" fill="#b9dcd6" /><rect x="332" y="454" width="26" height="2" fill="#b9dcd6" /><rect x="500" y="386" width="26" height="2" fill="#055" /><rect x="500" y="403" width="26" height="2" fill="#055" /><rect x="500" y="420" width="26" height="2" fill="#055" /><rect x="500" y="437" width="26" height="2" fill="#055" /><rect x="500" y="454" width="26" height="2" fill="#055" />
            <text x="197" y="498" font-size="7" font-weight="500" fill="#444">On Primary</text>
            <rect x="197" y="508" width="335" height="34" fill="#6200ee" /><rect x="197" y="542" width="111" height="35" fill="#fff" /><rect x="308" y="542" width="111" height="35" fill="#dcc0fb" /><rect x="419" y="542" width="113" height="35" fill="#a24dfa" /><rect x="197.500" y="508.500" width="334" height="68" fill="none" stroke="#d6b8fb" />
            <rect x="202" y="552" width="40" height="2" fill="#aaa" /><rect x="202" y="564" width="50" height="2" fill="#aaa" /><rect x="313" y="552" width="40" height="2" fill="#7a55a8" /><rect x="313" y="564" width="50" height="2" fill="#7a55a8" /><rect x="424" y="552" width="30" height="2" fill="#e6d7fb" /><rect x="424" y="564" width="50" height="2" fill="#e6d7fb" />
            <text x="197" y="611" font-size="7" font-weight="500" fill="#444">On Surface</text>
            <rect x="197" y="622" width="335" height="34" fill="#fff" /><rect x="197" y="656" width="111" height="34" fill="#1f1f1f" /><rect x="308" y="656" width="111" height="34" fill="#5e5e5e" /><rect x="419" y="656" width="113" height="34" fill="#999" />
            <rect x="202" y="667" width="40" height="2" fill="#aaa" /><rect x="202" y="678" width="50" height="2" fill="#aaa" /><rect x="313" y="667" width="40" height="2" fill="#ccc" /><rect x="313" y="678" width="50" height="2" fill="#ccc" /><rect x="424" y="667" width="30" height="2" fill="#e4e4e4" /><rect x="424" y="678" width="50" height="2" fill="#e4e4e4" />
            <text x="197" y="724" font-size="7" font-weight="500" fill="#444">Ripples</text>
            <rect x="197" y="735" width="335" height="34" fill="#f8f8f8" /><rect x="201" y="752" width="70" height="2" fill="#aaa" /><rect x="510" y="746" width="16" height="2" fill="#aaa" /><rect x="510" y="752" width="16" height="2" fill="#888" />
            <rect x="27" y="822" width="505" height="1" fill="#ededed" />
            <rect x="27" y="855" width="20" height="3" fill="#888" /><rect x="70" y="855" width="230" height="3" fill="#c4c4c4" /><rect x="503" y="855" width="29" height="3" fill="#999" />
          </svg>
        </div>

        <!-- elevation -->
        <div class="relative w-[186px] h-[298px] bg-[#f5f5f5] border-2 border-[#cfcfcf] -ml-px">
          <span class="absolute -top-[9px] left-px flex gap-[3px]"><i class="w-[2.500px] h-[2.500px] rounded-full bg-[#333]"></i><i class="w-[2.500px] h-[2.500px] rounded-full bg-[#333]"></i><i class="w-[2.500px] h-[2.500px] rounded-full bg-[#333]"></i></span>
          <svg class="absolute inset-[-2px] w-[186px] h-[298px] blur-[0.3px]" viewBox="0 0 558 894" font-family="Roboto">
            <text x="27" y="33" font-size="6.500" fill="#444" font-family="DejaVu Sans Mono">Material Design</text>
            <text x="27" y="56" font-size="18" fill="#222" font-family="DejaVu Sans Mono">Elevation</text>
            <rect x="27" y="132" width="505" height="2" fill="#e0e0e0" />
            <rect x="25" y="162" width="507" height="39" fill="#fff" />
            <rect x="25" y="221" width="507" height="38" fill="#ccc" filter="url(#soft)" /><rect x="25" y="219" width="507" height="38" fill="#fff" />
            <rect x="25" y="279" width="507" height="38" fill="#c8c8c8" filter="url(#soft)" /><rect x="25" y="276" width="507" height="38" fill="#fff" />
            <rect x="25" y="337" width="507" height="38" fill="#c0c0c0" filter="url(#soft)" /><rect x="25" y="333" width="507" height="38" fill="#fff" />
            <rect x="25" y="394" width="507" height="38" fill="#bbb" filter="url(#soft)" /><rect x="25" y="390" width="507" height="38" fill="#fff" />
            <rect x="25" y="451" width="507" height="38" fill="#b8b8b8" filter="url(#soft)" /><rect x="25" y="446" width="507" height="38" fill="#fff" />
            <rect x="25" y="508" width="507" height="38" fill="#b0b0b0" filter="url(#soft)" /><rect x="25" y="503" width="507" height="38" fill="#fff" />
            <rect x="25" y="565" width="507" height="38" fill="#999" filter="url(#soft)" /><rect x="25.500" y="560.500" width="506" height="37" fill="#fff" stroke="#aaa" />
            <rect x="25" y="623" width="507" height="38" fill="#aaa" filter="url(#soft)" /><rect x="25" y="617" width="507" height="38" fill="#fff" />
            <rect x="25" y="680" width="507" height="38" fill="#aaa" filter="url(#soft)" /><rect x="25" y="674" width="507" height="38" fill="#fff" />
            <rect x="25" y="737" width="507" height="38" fill="#a0a0a0" filter="url(#soft)" /><rect x="25" y="730" width="507" height="38" fill="#fff" />
            <rect x="30" y="188" width="14" height="3" fill="#bbb" /><rect x="30" y="245" width="14" height="3" fill="#bbb" /><rect x="30" y="302" width="14" height="3" fill="#bbb" /><rect x="30" y="359" width="14" height="3" fill="#bbb" /><rect x="30" y="416" width="14" height="3" fill="#bbb" /><rect x="30" y="473" width="14" height="3" fill="#bbb" /><rect x="30" y="530" width="14" height="3" fill="#bbb" /><rect x="30" y="587" width="14" height="3" fill="#bbb" /><rect x="30" y="643" width="14" height="3" fill="#bbb" /><rect x="30" y="700" width="14" height="3" fill="#bbb" /><rect x="30" y="756" width="14" height="3" fill="#bbb" />
            <rect x="27" y="822" width="505" height="1" fill="#ededed" />
            <rect x="27" y="855" width="20" height="3" fill="#888" /><rect x="70" y="855" width="230" height="3" fill="#c4c4c4" /><rect x="503" y="855" width="29" height="3" fill="#999" />
          </svg>
        </div>
      </div>

      <div class="h-[110px] pt-[51px]">
        <h1 class="flex items-center h-[30px] text-[23.200px] font-semibold text-[#5e5e5e] whitespace-nowrap">Material Components<svg class="w-[23px] h-[23px] ml-[6px] -mt-[2px]" viewBox="0 0 24 24"><circle cx="12" cy="12" r="11.500" fill="url(#coin)" /></svg></h1>
      </div>

      <div class="grid grid-cols-[133.500px_133.500px_133.500px_133.500px_133.500px] gap-x-[23px] gap-y-[29px]">

        <!-- App Bars: Top -->
        <div class="relative w-[133.500px] h-[155.500px] bg-[#f5f5f5] border-2 border-[#cfcfcf]">
          <span class="absolute -top-[9px] left-px flex gap-[3px]"><i class="w-[2.500px] h-[2.500px] rounded-full bg-[#333]"></i><i class="w-[2.500px] h-[2.500px] rounded-full bg-[#333]"></i><i class="w-[2.500px] h-[2.500px] rounded-full bg-[#333]"></i></span>
          <svg class="absolute inset-[-2px] w-[133px] h-[155px] blur-[0.3px]" viewBox="25 46 399 465" font-family="Roboto">
            <circle cx="406" cy="61" r="3.500" fill="#222" /><text x="51" y="77" font-size="6.500" fill="#444" font-family="DejaVu Sans Mono">Material Design</text><text x="51" y="102" font-size="18" fill="#222" font-family="DejaVu Sans Mono">App Bars: Top</text><rect x="51" y="128" width="347" height="2" fill="#e2e2e2" />
            <text x="51" y="161" font-size="7" font-weight="500" fill="#444">Standard</text><rect x="51" y="174" width="138" height="31" fill="#6200ee" /><rect x="235" y="174" width="138" height="31" fill="#6200ee" /><text x="79" y="196" font-size="7" fill="#fff">Page title</text><text x="263" y="196" font-size="7" fill="#fff">Page title</text><rect x="58" y="191" width="7" height="6" fill="#e6d7fb" /><rect x="242" y="191" width="7" height="6" fill="#e6d7fb" /><rect x="138" y="190" width="7" height="7" fill="#fff" /><rect x="156" y="190" width="7" height="7" fill="#c6a6f7" /><rect x="175" y="190" width="7" height="7" fill="#c6a6f7" /><rect x="322" y="190" width="7" height="7" fill="#fff" /><rect x="340" y="190" width="7" height="7" fill="#c6a6f7" /><rect x="359" y="190" width="7" height="7" fill="#c6a6f7" /><rect x="51" y="213" width="26" height="3" fill="#ccc" /><rect x="235" y="213" width="30" height="3" fill="#ccc" />
            <text x="51" y="257" font-size="7" font-weight="500" fill="#444">Extended</text><rect x="51" y="270" width="138" height="58" fill="#6200ee" /><rect x="235" y="270" width="138" height="58" fill="#6200ee" /><text x="79" y="319" font-size="7" fill="#fff">Page title</text><text x="263" y="319" font-size="7" fill="#fff">Page title</text><rect x="58" y="286" width="7" height="6" fill="#e6d7fb" /><rect x="242" y="286" width="7" height="6" fill="#e6d7fb" /><rect x="138" y="286" width="7" height="7" fill="#fff" /><rect x="156" y="286" width="7" height="7" fill="#c6a6f7" /><rect x="175" y="286" width="7" height="7" fill="#c6a6f7" /><rect x="322" y="286" width="7" height="7" fill="#fff" /><rect x="340" y="286" width="7" height="7" fill="#c6a6f7" /><rect x="359" y="286" width="7" height="7" fill="#c6a6f7" /><rect x="51" y="338" width="26" height="3" fill="#ccc" /><rect x="235" y="338" width="30" height="3" fill="#ccc" />
          </svg>
        </div>

        <!-- App Bars: Bottom -->
        <div class="relative w-[133.500px] h-[155.500px] bg-[#f5f5f5] border-2 border-[#cfcfcf]">
          <span class="absolute -top-[9px] left-px flex gap-[3px]"><i class="w-[2.500px] h-[2.500px] rounded-full bg-[#333]"></i><i class="w-[2.500px] h-[2.500px] rounded-full bg-[#333]"></i><i class="w-[2.500px] h-[2.500px] rounded-full bg-[#333]"></i></span>
          <svg class="absolute inset-[-2px] w-[133px] h-[155px] blur-[0.3px]" viewBox="493 46 399 465" font-family="Roboto">
            <circle cx="876" cy="61" r="3.500" fill="#222" /><text x="520" y="77" font-size="6.500" fill="#444" font-family="DejaVu Sans Mono">Material Design</text><text x="520" y="102" font-size="18" fill="#222" font-family="DejaVu Sans Mono">App Bars: Bottom</text><rect x="520" y="128" width="347" height="2" fill="#e2e2e2" />
            <text x="520" y="161" font-size="7" font-weight="500" fill="#444">No FAB</text><rect x="520" y="173" width="139" height="23" fill="#6200ee" /><circle cx="589" cy="173" r="11" fill="#03dac5" /><rect x="527" y="182" width="7" height="6" fill="#e6d7fb" /><rect x="626" y="182" width="7" height="6" fill="#c6a6f7" /><rect x="644" y="182" width="7" height="6" fill="#c6a6f7" />
            <text x="520" y="242" font-size="7" font-weight="500" fill="#444">FAB center</text><rect x="520" y="265" width="139" height="23" fill="#6200ee" /><circle cx="589" cy="265" r="11" fill="#03dac5" /><rect x="527" y="273" width="7" height="6" fill="#e6d7fb" /><rect x="626" y="273" width="7" height="6" fill="#c6a6f7" /><rect x="644" y="273" width="7" height="6" fill="#c6a6f7" />
            <text x="704" y="242" font-size="7" font-weight="500" fill="#444">FAB center cut</text><rect x="704" y="265" width="139" height="23" fill="#6200ee" /><circle cx="773" cy="265" r="13" fill="#f5f5f5" /><circle cx="773" cy="265" r="10" fill="#03dac5" /><rect x="711" y="273" width="7" height="6" fill="#e6d7fb" /><rect x="810" y="273" width="7" height="6" fill="#c6a6f7" /><rect x="828" y="273" width="7" height="6" fill="#c6a6f7" />
            <text x="520" y="332" font-size="7" font-weight="500" fill="#444">FAB end</text><rect x="520" y="356" width="139" height="23" fill="#6200ee" /><circle cx="642" cy="356" r="11" fill="#03dac5" /><rect x="527" y="364" width="7" height="6" fill="#c6a6f7" /><rect x="545" y="364" width="7" height="6" fill="#c6a6f7" /><rect x="564" y="364" width="7" height="6" fill="#fff" /><rect x="582" y="364" width="7" height="6" fill="#c6a6f7" />
            <text x="704" y="332" font-size="7" font-weight="500" fill="#444">FAB end cut</text><rect x="704" y="356" width="139" height="23" fill="#6200ee" /><circle cx="825" cy="356" r="13" fill="#f5f5f5" /><circle cx="825" cy="356" r="10" fill="#03dac5" /><rect x="711" y="364" width="7" height="6" fill="#c6a6f7" /><rect x="729" y="364" width="7" height="6" fill="#c6a6f7" /><rect x="748" y="364" width="7" height="6" fill="#fff" /><rect x="766" y="364" width="7" height="6" fill="#c6a6f7" />
          </svg>
        </div>

        <!-- Backdrop -->
        <div class="relative w-[133.500px] h-[155.500px] bg-[#f5f5f5] border-2 border-[#cfcfcf]">
          <span class="absolute -top-[9px] left-px flex gap-[3px]"><i class="w-[2.500px] h-[2.500px] rounded-full bg-[#333]"></i><i class="w-[2.500px] h-[2.500px] rounded-full bg-[#333]"></i><i class="w-[2.500px] h-[2.500px] rounded-full bg-[#333]"></i></span>
          <svg class="absolute inset-[-2px] w-[133px] h-[155px] blur-[0.3px]" viewBox="963 46 399 465" font-family="Roboto">
            <circle cx="1345" cy="61" r="3.500" fill="#222" /><text x="990" y="77" font-size="6.500" fill="#444" font-family="DejaVu Sans Mono">Material Design</text><text x="990" y="102" font-size="18" fill="#222" font-family="DejaVu Sans Mono">Backdrop</text><rect x="990" y="128" width="347" height="2" fill="#e2e2e2" />
            <text x="990" y="161" font-size="7" font-weight="500" fill="#444">Backdrop</text>
            <rect x="990" y="174" width="139" height="245" fill="#fff" stroke="#d9c2f7" stroke-width="3" /><rect x="990" y="174" width="139" height="22" fill="#6200ee" /><rect x="997" y="181" width="7" height="6" fill="#e6d7fb" /><rect x="1079" y="181" width="7" height="6" fill="#c6a6f7" /><rect x="1096" y="180" width="7" height="7" fill="#fff" /><rect x="1114" y="181" width="7" height="6" fill="#c6a6f7" />
            <rect x="1174" y="174" width="139" height="245" fill="#fff" stroke="#d9c2f7" stroke-width="3" /><rect x="1174" y="174" width="138" height="197" fill="#6200ee" /><rect x="1181" y="181" width="7" height="6" fill="#e6d7fb" /><rect x="1262" y="181" width="7" height="6" fill="#c6a6f7" /><rect x="1280" y="180" width="7" height="7" fill="#fff" /><rect x="1298" y="181" width="7" height="6" fill="#c6a6f7" />
            <rect x="990" y="428" width="62" height="3" fill="#ccc" /><rect x="1174" y="428" width="62" height="3" fill="#ccc" />
          </svg>
        </div>

        <!-- Banner -->
        <div class="relative w-[133.500px] h-[155.500px] bg-[#f5f5f5] border-2 border-[#cfcfcf]">
          <span class="absolute -top-[9px] left-px flex gap-[3px]"><i class="w-[2.500px] h-[2.500px] rounded-full bg-[#333]"></i><i class="w-[2.500px] h-[2.500px] rounded-full bg-[#333]"></i><i class="w-[2.500px] h-[2.500px] rounded-full bg-[#333]"></i></span>
          <svg class="absolute inset-[-2px] w-[133px] h-[155px] blur-[0.3px]" viewBox="38 46 399 465" font-family="Roboto">
            <circle cx="420" cy="61" r="3.500" fill="#222" /><text x="64" y="77" font-size="6.500" fill="#444" font-family="DejaVu Sans Mono">Material Design</text><text x="64" y="102" font-size="18" fill="#222" font-family="DejaVu Sans Mono">Banner</text><rect x="64" y="128" width="347" height="2" fill="#e2e2e2" />
            <text x="64" y="161" font-size="7" font-weight="500" fill="#444">One line</text><rect x="64" y="174" width="138" height="21" fill="#fff" /><rect x="70" y="183" width="88" height="2" fill="#bbb" /><rect x="174" y="183" width="24" height="3" fill="#a46af5" />
            <text x="64" y="230" font-size="7" font-weight="500" fill="#444">Two line</text><rect x="64" y="244" width="138" height="42" fill="#fff" /><rect x="70" y="252" width="120" height="2" fill="#ccc" /><rect x="70" y="259" width="96" height="2" fill="#ccc" /><rect x="143" y="275" width="24" height="3" fill="#a46af5" /><rect x="174" y="275" width="24" height="3" fill="#a46af5" />
            <rect x="249" y="244" width="138" height="42" fill="#fff" /><circle cx="262" cy="258" r="7" fill="#e4e4e4" /><rect x="276" y="252" width="100" height="2" fill="#ccc" /><rect x="276" y="259" width="88" height="2" fill="#ccc" /><rect x="327" y="275" width="24" height="3" fill="#a46af5" /><rect x="358" y="275" width="24" height="3" fill="#a46af5" />
          </svg>
        </div>

        <!-- Bottom Navigation -->
        <div class="relative w-[133.500px] h-[155.500px] bg-[#f5f5f5] border-2 border-[#cfcfcf]">
          <span class="absolute -top-[9px] left-px flex gap-[3px]"><i class="w-[2.500px] h-[2.500px] rounded-full bg-[#333]"></i><i class="w-[2.500px] h-[2.500px] rounded-full bg-[#333]"></i><i class="w-[2.500px] h-[2.500px] rounded-full bg-[#333]"></i></span>
          <svg class="absolute inset-[-2px] w-[133px] h-[155px] blur-[0.3px]" viewBox="507 46 399 465" font-family="Roboto">
            <circle cx="889" cy="61" r="3.500" fill="#222" /><text x="533" y="77" font-size="6.500" fill="#444" font-family="DejaVu Sans Mono">Material Design</text><text x="533" y="102" font-size="18" fill="#222" font-family="DejaVu Sans Mono">Bottom Navigation</text><rect x="533" y="128" width="347" height="2" fill="#e2e2e2" />
            <text x="533" y="161" font-size="7" font-weight="500" fill="#444">Bottom Nav</text>
            <rect x="533" y="175" width="139" height="23" fill="#bbb" opacity=".6" /><rect x="533" y="173" width="139" height="23" fill="#6200ee" /><rect x="552" y="178" width="8" height="6" fill="#fff" /><rect x="599" y="178" width="7" height="6" fill="#c6a6f7" /><rect x="645" y="178" width="8" height="6" fill="#fff" /><rect x="546" y="189" width="20" height="2" fill="#e6d7fb" /><rect x="593" y="189" width="18" height="2" fill="#c6a6f7" /><rect x="638" y="189" width="22" height="2" fill="#c6a6f7" /><rect x="533" y="204" width="20" height="2" fill="#ccc" />
            <rect x="533" y="229" width="139" height="23" fill="#bbb" opacity=".6" /><rect x="533" y="227" width="139" height="23" fill="#6200ee" /><rect x="546" y="232" width="8" height="6" fill="#fff" /><rect x="582" y="232" width="7" height="6" fill="#c6a6f7" /><rect x="616" y="232" width="8" height="6" fill="#fff" /><rect x="651" y="232" width="8" height="6" fill="#fff" /><rect x="540" y="243" width="20" height="2" fill="#e6d7fb" /><rect x="576" y="243" width="18" height="2" fill="#c6a6f7" /><rect x="610" y="243" width="20" height="2" fill="#c6a6f7" /><rect x="642" y="243" width="24" height="2" fill="#c6a6f7" /><rect x="533" y="258" width="18" height="2" fill="#ccc" />
            <rect x="533" y="283" width="139" height="23" fill="#bbb" opacity=".6" /><rect x="533" y="281" width="139" height="23" fill="#6200ee" /><rect x="543" y="286" width="8" height="6" fill="#fff" /><rect x="570" y="286" width="7" height="6" fill="#c6a6f7" /><rect x="599" y="286" width="6" height="6" fill="#fff" /><rect x="627" y="286" width="6" height="6" fill="#fff" /><rect x="654" y="286" width="7" height="6" fill="#fff" /><rect x="537" y="297" width="18" height="2" fill="#e6d7fb" /><rect x="566" y="297" width="16" height="2" fill="#c6a6f7" /><rect x="595" y="297" width="14" height="2" fill="#c6a6f7" /><rect x="618" y="297" width="20" height="2" fill="#c6a6f7" /><rect x="650" y="297" width="16" height="2" fill="#c6a6f7" /><rect x="533" y="312" width="18" height="2" fill="#ccc" />
            <rect x="548" y="341" width="316" height="1" fill="#e6e6e6" />
            <text x="533" y="369" font-size="7" font-weight="500" fill="#444">Elements</text><rect x="533" y="384" width="139" height="23" fill="#bbb" opacity=".6" /><rect x="533" y="382" width="139" height="22" fill="#6200ee" /><rect x="533" y="411" width="42" height="2" fill="#ccc" />
            <rect x="533" y="436" width="31" height="23" fill="#6200ee" /><rect x="544" y="440" width="8" height="6" fill="#fff" /><rect x="539" y="451" width="20" height="2" fill="#c6a6f7" /><rect x="580" y="436" width="31" height="23" fill="#6200ee" /><rect x="591" y="440" width="8" height="6" fill="#fff" /><rect x="586" y="451" width="20" height="2" fill="#c6a6f7" /><rect x="533" y="465" width="16" height="2" fill="#ccc" /><rect x="580" y="465" width="18" height="2" fill="#ccc" />
          </svg>
        </div>

        <!-- Buttons -->
        <div class="relative w-[133.500px] h-[155.500px] bg-[#f5f5f5] border-2 border-[#cfcfcf]">
          <span class="absolute -top-[9px] left-px flex gap-[3px]"><i class="w-[2.500px] h-[2.500px] rounded-full bg-[#333]"></i><i class="w-[2.500px] h-[2.500px] rounded-full bg-[#333]"></i><i class="w-[2.500px] h-[2.500px] rounded-full bg-[#333]"></i></span>
          <svg class="absolute inset-[-2px] w-[133px] h-[155px] blur-[0.3px]" viewBox="25 43 399 465" font-family="Roboto">
            <circle cx="406" cy="58" r="3.500" fill="#222" /><text x="51" y="75" font-size="6.500" fill="#444" font-family="DejaVu Sans Mono">Material Design</text><text x="51" y="99" font-size="18" fill="#222" font-family="DejaVu Sans Mono">Buttons</text><rect x="51" y="126" width="347" height="2" fill="#e2e2e2" />
            <text x="51" y="159" font-size="7" font-weight="500" fill="#444">Text</text>
            <rect x="54" y="176" width="26" height="3" fill="#b78ef7" /><rect x="94" y="176" width="28" height="3" fill="#b78ef7" /><rect x="136" y="171" width="30" height="13" fill="#e9dcfb" /><rect x="140" y="176" width="22" height="3" fill="#b78ef7" /><rect x="180" y="176" width="24" height="3" fill="#b78ef7" /><rect x="218" y="172" width="32" height="14" fill="#ddd" /><rect x="222" y="176" width="24" height="3" fill="#b78ef7" /><rect x="264" y="176" width="26" height="3" fill="#ddd" />
            <rect x="54" y="203" width="36" height="3" fill="#b78ef7" /><rect x="108" y="203" width="38" height="3" fill="#b78ef7" /><rect x="158" y="198" width="44" height="13" fill="#e9dcfb" /><rect x="162" y="203" width="36" height="3" fill="#b78ef7" /><rect x="214" y="203" width="36" height="3" fill="#b78ef7" /><rect x="262" y="198" width="46" height="15" fill="#ddd" /><rect x="266" y="203" width="38" height="3" fill="#b78ef7" /><rect x="320" y="203" width="36" height="3" fill="#ddd" />
            <text x="51" y="247" font-size="7" font-weight="500" fill="#444">Outlined</text>
            <rect x="54" y="259" width="32" height="14" fill="none" stroke="#ddd" /><rect x="58" y="264" width="24" height="3" fill="#b78ef7" /><rect x="98" y="259" width="38" height="14" fill="none" stroke="#ddd" /><rect x="102" y="264" width="28" height="3" fill="#b78ef7" /><rect x="142" y="259" width="40" height="15" fill="#e9dcfb" /><rect x="147" y="264" width="30" height="3" fill="#b78ef7" /><rect x="196" y="264" width="26" height="3" fill="#b78ef7" /><rect x="236" y="259" width="40" height="15" fill="#ddd" stroke="#aaa" /><rect x="241" y="264" width="30" height="3" fill="#b78ef7" /><rect x="288" y="264" width="30" height="3" fill="#ddd" />
            <rect x="54" y="291" width="38" height="3" fill="#b78ef7" /><rect x="108" y="284" width="44" height="15" fill="none" stroke="#ddd" /><rect x="112" y="291" width="36" height="3" fill="#b78ef7" /><rect x="162" y="284" width="48" height="15" fill="#e9dcfb" /><rect x="167" y="291" width="38" height="3" fill="#b78ef7" /><rect x="222" y="291" width="38" height="3" fill="#b78ef7" /><rect x="274" y="285" width="48" height="15" fill="#ddd" stroke="#aaa" /><rect x="279" y="291" width="38" height="3" fill="#b78ef7" /><rect x="334" y="291" width="40" height="3" fill="#ddd" />
            <text x="51" y="335" font-size="7" font-weight="500" fill="#444">Contained</text>
            <rect x="51" y="347" width="39" height="15" fill="#6200ee" /><rect x="97" y="347" width="39" height="15" fill="#6200ee" /><rect x="143" y="347" width="39" height="15" fill="#6200ee" /><rect x="190" y="347" width="39" height="15" fill="#6200ee" /><rect x="236" y="347" width="39" height="15" fill="#6200ee" /><rect x="57" y="353" width="26" height="2" fill="#b78ef7" /><rect x="103" y="353" width="26" height="2" fill="#b78ef7" /><rect x="149" y="353" width="26" height="2" fill="#b78ef7" /><rect x="196" y="353" width="26" height="2" fill="#b78ef7" /><rect x="242" y="353" width="26" height="2" fill="#b78ef7" /><rect x="284" y="347" width="38" height="15" fill="#f8f8f8" stroke="#e8e8e8" /><rect x="290" y="353" width="26" height="2" fill="#ddd" />
            <rect x="51" y="373" width="46" height="15" fill="#6200ee" /><rect x="105" y="373" width="46" height="15" fill="#6200ee" /><rect x="159" y="373" width="48" height="15" fill="#6200ee" /><rect x="214" y="373" width="46" height="15" fill="#6200ee" /><rect x="268" y="373" width="47" height="17" fill="#6200ee" /><rect x="57" y="379" width="34" height="2" fill="#b78ef7" /><rect x="111" y="379" width="34" height="2" fill="#b78ef7" /><rect x="165" y="379" width="36" height="2" fill="#b78ef7" /><rect x="220" y="379" width="34" height="2" fill="#b78ef7" /><rect x="274" y="379" width="34" height="2" fill="#b78ef7" /><rect x="324" y="373" width="44" height="15" fill="#f8f8f8" stroke="#e8e8e8" /><rect x="330" y="379" width="32" height="2" fill="#ddd" />
            <text x="51" y="424" font-size="7" font-weight="500" fill="#444">Toggle</text>
            <rect x="57" y="442" width="7" height="6" fill="#555" /><rect x="71" y="437" width="15" height="15" fill="#ece2fb" /><rect x="75" y="442" width="7" height="6" fill="#6200ee" /><rect x="94" y="442" width="6" height="6" fill="#555" />
            <rect x="57" y="472" width="7" height="6" fill="#555" /><rect x="85" y="472" width="6" height="6" fill="#bbb" /><rect x="112" y="472" width="7" height="6" fill="#555" /><rect x="143" y="466" width="18" height="18" fill="#ece2fb" /><rect x="149" y="472" width="7" height="6" fill="#6200ee" /><rect x="171" y="466" width="18" height="18" fill="#ece2fb" /><rect x="176" y="472" width="7" height="6" fill="#6200ee" /><rect x="199" y="466" width="18" height="18" fill="#ece2fb" /><rect x="204" y="472" width="7" height="6" fill="#6200ee" />
          </svg>
        </div>

        <!-- FAB -->
        <div class="relative w-[133.500px] h-[155.500px] bg-[#f5f5f5] border-2 border-[#cfcfcf]">
          <span class="absolute -top-[9px] left-px flex gap-[3px]"><i class="w-[2.500px] h-[2.500px] rounded-full bg-[#333]"></i><i class="w-[2.500px] h-[2.500px] rounded-full bg-[#333]"></i><i class="w-[2.500px] h-[2.500px] rounded-full bg-[#333]"></i></span>
          <svg class="absolute inset-[-2px] w-[133px] h-[155px] blur-[0.3px]" viewBox="495 43 399 465" font-family="Roboto">
            <circle cx="876" cy="58" r="3.500" fill="#222" /><text x="520" y="75" font-size="6.500" fill="#444" font-family="DejaVu Sans Mono">Material Design</text><text x="520" y="99" font-size="18" fill="#222" font-family="DejaVu Sans Mono">FAB</text><rect x="520" y="126" width="347" height="2" fill="#e2e2e2" />
            <text x="520" y="159" font-size="7" font-weight="500" fill="#444">FAB</text><text x="704" y="159" font-size="7" font-weight="500" fill="#444">Mini</text>
            <circle cx="530" cy="183" r="11" fill="#03dac5" /><circle cx="570" cy="183" r="11" fill="#03dac5" /><circle cx="610" cy="183" r="11" fill="#03dac5" /><circle cx="650" cy="183" r="11" fill="#03dac5" /><rect x="526" y="180" width="7" height="6" fill="#2aa396" /><rect x="566" y="180" width="7" height="6" fill="#2aa396" /><rect x="606" y="180" width="7" height="6" fill="#2aa396" /><rect x="646" y="180" width="7" height="6" fill="#2aa396" /><rect x="522" y="200" width="16" height="2" fill="#ccc" /><rect x="562" y="200" width="16" height="2" fill="#ccc" /><rect x="602" y="200" width="16" height="2" fill="#ccc" /><rect x="642" y="200" width="16" height="2" fill="#ccc" />
            <circle cx="715" cy="186" r="7.500" fill="#03dac5" /><circle cx="755" cy="186" r="7.500" fill="#03dac5" /><circle cx="795" cy="186" r="7.500" fill="#03dac5" /><circle cx="835" cy="186" r="7.500" fill="#03dac5" /><rect x="712" y="183" width="6" height="6" fill="#2aa396" /><rect x="752" y="183" width="6" height="6" fill="#2aa396" /><rect x="792" y="183" width="6" height="6" fill="#2aa396" /><rect x="832" y="183" width="6" height="6" fill="#2aa396" /><rect x="707" y="200" width="16" height="2" fill="#ccc" /><rect x="747" y="200" width="16" height="2" fill="#ccc" /><rect x="787" y="200" width="16" height="2" fill="#ccc" /><rect x="827" y="200" width="16" height="2" fill="#ccc" />
            <circle cx="530" cy="234" r="11" fill="#6200ee" /><circle cx="570" cy="234" r="11" fill="#6200ee" /><circle cx="610" cy="234" r="11" fill="#6200ee" /><circle cx="650" cy="234" r="11" fill="#6200ee" /><rect x="526" y="231" width="7" height="6" fill="#8e4df5" /><rect x="566" y="231" width="7" height="6" fill="#8e4df5" /><rect x="606" y="231" width="7" height="6" fill="#8e4df5" /><rect x="646" y="231" width="7" height="6" fill="#8e4df5" /><rect x="522" y="252" width="16" height="2" fill="#ccc" /><rect x="562" y="252" width="16" height="2" fill="#ccc" /><rect x="602" y="252" width="16" height="2" fill="#ccc" /><rect x="642" y="252" width="16" height="2" fill="#ccc" />
            <circle cx="715" cy="232" r="7.500" fill="#6200ee" /><circle cx="755" cy="232" r="7.500" fill="#6200ee" /><circle cx="795" cy="232" r="7.500" fill="#6200ee" /><circle cx="835" cy="232" r="7.500" fill="#6200ee" /><rect x="707" y="247" width="16" height="2" fill="#ccc" /><rect x="747" y="247" width="16" height="2" fill="#ccc" /><rect x="787" y="247" width="16" height="2" fill="#ccc" /><rect x="827" y="247" width="16" height="2" fill="#ccc" />
            <text x="520" y="292" font-size="7" font-weight="500" fill="#444">Extended</text>
            <rect x="520" y="306" width="48" height="19" rx="9.500" fill="#03dac5" /><rect x="586" y="306" width="48" height="19" rx="9.500" fill="#03dac5" /><rect x="653" y="306" width="48" height="19" rx="9.500" fill="#03dac5" /><rect x="719" y="306" width="48" height="19" rx="9.500" fill="#02bdaa" /><rect x="532" y="314" width="28" height="3" fill="#1a9c8e" /><rect x="598" y="314" width="28" height="3" fill="#1a9c8e" /><rect x="665" y="314" width="28" height="3" fill="#1a9c8e" /><rect x="731" y="314" width="28" height="3" fill="#1a9c8e" /><rect x="520" y="336" width="20" height="2" fill="#ccc" /><rect x="586" y="336" width="20" height="2" fill="#ccc" /><rect x="653" y="336" width="20" height="2" fill="#ccc" /><rect x="719" y="336" width="20" height="2" fill="#ccc" />
            <rect x="520" y="358" width="48" height="19" rx="9.500" fill="#6200ee" /><rect x="586" y="358" width="48" height="19" rx="9.500" fill="#6200ee" /><rect x="653" y="358" width="48" height="19" rx="9.500" fill="#6200ee" /><rect x="719" y="358" width="48" height="19" rx="9.500" fill="#6200ee" /><rect x="532" y="366" width="28" height="3" fill="#a273f3" /><rect x="598" y="366" width="28" height="3" fill="#a273f3" /><rect x="665" y="366" width="28" height="3" fill="#a273f3" /><rect x="731" y="366" width="28" height="3" fill="#a273f3" /><rect x="520" y="389" width="20" height="2" fill="#ccc" /><rect x="586" y="389" width="20" height="2" fill="#ccc" /><rect x="653" y="389" width="20" height="2" fill="#ccc" /><rect x="719" y="389" width="20" height="2" fill="#ccc" />
          </svg>
        </div>

        <!-- Cards -->
        <div class="relative w-[133.500px] h-[155.500px] bg-[#f5f5f5] border-2 border-[#cfcfcf]">
          <span class="absolute -top-[9px] left-px flex gap-[3px]"><i class="w-[2.500px] h-[2.500px] rounded-full bg-[#333]"></i><i class="w-[2.500px] h-[2.500px] rounded-full bg-[#333]"></i><i class="w-[2.500px] h-[2.500px] rounded-full bg-[#333]"></i></span>
          <svg class="absolute inset-[-2px] w-[133px] h-[155px] blur-[0.3px]" viewBox="964 43 399 465" font-family="Roboto">
            <circle cx="1345" cy="58" r="3.500" fill="#222" /><text x="990" y="75" font-size="6.500" fill="#444" font-family="DejaVu Sans Mono">Material Design</text><text x="990" y="99" font-size="18" fill="#222" font-family="DejaVu Sans Mono">Cards</text><rect x="990" y="126" width="347" height="2" fill="#e2e2e2" />
            <text x="990" y="153" font-size="7" font-weight="500" fill="#444">Card</text>
            <rect x="990" y="166" width="132" height="148" fill="#fff" /><circle cx="1005" cy="181" r="7" fill="#e4e4e4" /><text x="1018" y="180" font-size="7" font-weight="500" fill="#444">Headline 6</text><rect x="1018" y="184" width="16" height="2" fill="#bbb" /><rect x="1104" y="178" width="8" height="6" fill="#999" /><rect x="990" y="195" width="132" height="73" fill="#dedede" /><use href="#pic" x="1024" y="198" width="66" height="66" /><rect x="996" y="274" width="110" height="2" fill="#ccc" /><rect x="996" y="280" width="110" height="2" fill="#ccc" /><rect x="996" y="286" width="70" height="2" fill="#ccc" /><rect x="996" y="303" width="24" height="3" fill="#a46af5" /><rect x="1032" y="303" width="24" height="3" fill="#a46af5" />
            <rect x="1149" y="166" width="132" height="148" fill="#fff" /><circle cx="1163" cy="181" r="7" fill="#eee" /><text x="1177" y="180" font-size="7" font-weight="500" fill="#777">Headline 6</text><rect x="1177" y="184" width="16" height="2" fill="#ccc" /><rect x="1263" y="178" width="8" height="6" fill="#bbb" /><rect x="1149" y="195" width="132" height="73" fill="#f0f0f0" /><g opacity=".5"><use href="#pic" x="1182" y="198" width="66" height="66" /></g><rect x="1155" y="274" width="110" height="2" fill="#ddd" /><rect x="1155" y="280" width="110" height="2" fill="#ddd" /><rect x="1155" y="286" width="70" height="2" fill="#ddd" /><rect x="1155" y="303" width="24" height="3" fill="#b78ef7" /><rect x="1191" y="303" width="24" height="3" fill="#b78ef7" />
            <rect x="990" y="323" width="26" height="2" fill="#ccc" /><rect x="1149" y="323" width="26" height="2" fill="#ccc" />
            <text x="990" y="356" font-size="7" font-weight="500" fill="#444">States</text>
            <rect x="990" y="371" width="37" height="39" fill="#fff" /><rect x="1037" y="371" width="39" height="39" fill="#f8f8f8" stroke="#e8e8e8" /><rect x="1084" y="371" width="40" height="39" fill="#dedede" /><rect x="1132" y="371" width="40" height="39" fill="#fff" /><path d="M1143 410a30 30 0 0 1 29-28v28z" fill="#dedede" /><rect x="1179" y="371" width="40" height="41" fill="#e8e8e8" stroke="#bbb" /><rect x="1228" y="371" width="40" height="39" fill="#f0e6ff" /><circle cx="1258" cy="378" r="4" fill="#6200ee" /><rect x="1275" y="371" width="39" height="39" fill="#fff" />
            <rect x="994" y="399" width="18" height="2" fill="#999" /><rect x="1042" y="399" width="18" height="2" fill="#999" /><rect x="1090" y="399" width="18" height="2" fill="#999" /><rect x="1136" y="399" width="18" height="2" fill="#999" /><rect x="1184" y="399" width="18" height="2" fill="#999" /><rect x="1233" y="399" width="18" height="2" fill="#999" /><rect x="1281" y="399" width="18" height="2" fill="#ddd" /><rect x="990" y="416" width="38" height="2" fill="#ccc" />
            <rect x="990" y="436" width="37" height="39" fill="#fff" /><rect x="1037" y="436" width="39" height="39" fill="#f8f8f8" stroke="#e8e8e8" /><rect x="1084" y="436" width="40" height="39" fill="#dedede" /><rect x="1132" y="436" width="40" height="39" fill="#fff" /><path d="M1143 475a30 30 0 0 1 29-28v28z" fill="#dedede" /><rect x="1179" y="436" width="40" height="41" fill="#e8e8e8" stroke="#bbb" /><rect x="1228" y="436" width="40" height="39" fill="#f0e6ff" /><circle cx="1258" cy="443" r="4" fill="#6200ee" /><rect x="1275" y="436" width="39" height="39" fill="#fff" />
            <rect x="994" y="465" width="18" height="2" fill="#999" /><rect x="1042" y="465" width="18" height="2" fill="#999" /><rect x="1090" y="465" width="18" height="2" fill="#999" /><rect x="1136" y="465" width="18" height="2" fill="#999" /><rect x="1184" y="465" width="18" height="2" fill="#999" /><rect x="1233" y="465" width="18" height="2" fill="#999" /><rect x="1281" y="465" width="18" height="2" fill="#ddd" /><rect x="990" y="481" width="38" height="2" fill="#ccc" />
          </svg>
        </div>

        <!-- Cards, elements -->
        <div class="relative w-[133.500px] h-[155.500px] bg-[#f5f5f5] border-2 border-[#cfcfcf]">
          <span class="absolute -top-[9px] left-px flex gap-[3px]"><i class="w-[2.500px] h-[2.500px] rounded-full bg-[#333]"></i><i class="w-[2.500px] h-[2.500px] rounded-full bg-[#333]"></i><i class="w-[2.500px] h-[2.500px] rounded-full bg-[#333]"></i></span>
          <svg class="absolute inset-[-2px] w-[133px] h-[155px] blur-[0.3px]" viewBox="38 598 399 465" font-family="Roboto">
            <circle cx="420" cy="614" r="3.500" fill="#222" /><text x="64" y="630" font-size="6.500" fill="#444" font-family="DejaVu Sans Mono">Material Design</text><text x="64" y="654" font-size="18" fill="#222" font-family="DejaVu Sans Mono">Cards</text><rect x="64" y="681" width="347" height="2" fill="#e2e2e2" />
            <text x="64" y="708" font-size="7" font-weight="500" fill="#444">Elements</text>
            <text x="70" y="736" font-size="12" fill="#555">Headline 4</text><rect x="70" y="743" width="16" height="2" fill="#bbb" /><rect x="70" y="759" width="15" height="15" fill="#e4e4e4" /><text x="92" y="765" font-size="7" font-weight="500" fill="#444">Headline 6</text><rect x="92" y="771" width="16" height="2" fill="#bbb" /><rect x="178" y="765" width="8" height="6" fill="#999" />
            <text x="70" y="801" font-size="7" font-weight="500" fill="#444">Headline 6</text><rect x="70" y="806" width="16" height="2" fill="#bbb" /><rect x="70" y="831" width="22" height="2" fill="#bbb" /><text x="70" y="845" font-size="7" font-weight="500" fill="#444">Headline 6</text><rect x="70" y="852" width="16" height="2" fill="#bbb" />
            <text x="243" y="732" font-size="9" fill="#555">Headline 5</text><rect x="243" y="739" width="16" height="2" fill="#bbb" /><text x="243" y="774" font-size="9" fill="#555">Headline 5</text><rect x="243" y="780" width="15" height="3" fill="#a46af5" /><rect x="262" y="781" width="22" height="2" fill="#ccc" /><text x="243" y="816" font-size="12" fill="#555">Headline 4</text><rect x="243" y="824" width="16" height="2" fill="#bbb" />
            <rect x="64" y="886" width="132" height="75" fill="#dcd3e8" /><use href="#pic" x="96" y="890" width="66" height="66" /><circle cx="188" cy="894" r="4.500" fill="#6200ee" /><rect x="206" y="886" width="132" height="75" fill="#dcd3e8" /><use href="#pic" x="238" y="890" width="66" height="66" /><circle cx="329" cy="894" r="4.500" fill="#6200ee" />
            <rect x="70" y="990" width="24" height="3" fill="#a46af5" /><rect x="106" y="990" width="24" height="3" fill="#a46af5" />
          </svg>
        </div>

        <!-- Chips -->
        <div class="relative w-[133.500px] h-[155.500px] bg-[#f5f5f5] border-2 border-[#cfcfcf]">
          <span class="absolute -top-[9px] left-px flex gap-[3px]"><i class="w-[2.500px] h-[2.500px] rounded-full bg-[#333]"></i><i class="w-[2.500px] h-[2.500px] rounded-full bg-[#333]"></i><i class="w-[2.500px] h-[2.500px] rounded-full bg-[#333]"></i></span>
          <svg class="absolute inset-[-2px] w-[133px] h-[155px] blur-[0.3px]" viewBox="507 598 399 465" font-family="Roboto">
            <circle cx="889" cy="614" r="3.500" fill="#222" /><text x="533" y="630" font-size="6.500" fill="#444" font-family="DejaVu Sans Mono">Material Design</text><text x="533" y="654" font-size="18" fill="#222" font-family="DejaVu Sans Mono">Chips</text><rect x="533" y="681" width="347" height="2" fill="#e2e2e2" />
            <text x="533" y="708" font-size="7" font-weight="500" fill="#444">Input</text>
            <rect x="535" y="723" width="42" height="11" rx="5" fill="#e8e8e8" /><rect x="583" y="723" width="37" height="11" rx="5" fill="#e8e8e8" /><rect x="626" y="723" width="44" height="11" rx="5" fill="#ccc" /><rect x="676" y="723" width="42" height="11" rx="5" fill="#e8e8e8" /><rect x="724" y="722" width="44" height="14" rx="6" fill="#c6c6c6" /><rect x="773" y="723" width="44" height="11" rx="5" fill="#d6d6d6" /><rect x="823" y="723" width="42" height="11" rx="5" fill="#eee" />
            <rect x="535" y="744" width="36" height="11" rx="5" fill="#e8e8e8" /><rect x="576" y="744" width="30" height="11" rx="5" fill="#e8e8e8" /><rect x="611" y="744" width="38" height="11" rx="5" fill="#c6c6c6" /><rect x="655" y="744" width="34" height="11" rx="5" fill="#e8e8e8" /><rect x="695" y="744" width="38" height="14" rx="6" fill="#c6c6c6" /><rect x="738" y="744" width="44" height="11" rx="5" fill="#d6d6d6" /><rect x="790" y="744" width="36" height="11" rx="5" fill="#eee" />
            <rect x="568" y="726" width="5" height="5" fill="#555" /><rect x="611" y="726" width="5" height="5" fill="#555" /><rect x="661" y="726" width="5" height="5" fill="#444" /><rect x="709" y="726" width="5" height="5" fill="#555" /><rect x="759" y="726" width="5" height="5" fill="#444" /><rect x="808" y="726" width="5" height="5" fill="#444" /><rect x="856" y="726" width="5" height="5" fill="#999" /><rect x="562" y="747" width="5" height="5" fill="#555" /><rect x="597" y="747" width="5" height="5" fill="#555" /><rect x="640" y="747" width="5" height="5" fill="#444" /><rect x="680" y="747" width="5" height="5" fill="#555" /><rect x="724" y="747" width="5" height="5" fill="#444" /><rect x="773" y="747" width="5" height="5" fill="#444" /><rect x="817" y="747" width="5" height="5" fill="#999" />
            <text x="533" y="790" font-size="7" font-weight="500" fill="#444">Filter</text>
            <rect x="535" y="806" width="32" height="11" rx="5" fill="#e8e8e8" /><rect x="573" y="806" width="30" height="11" rx="5" fill="#e8e8e8" /><rect x="609" y="806" width="34" height="11" rx="5" fill="#ccc" /><rect x="650" y="806" width="32" height="11" rx="5" fill="#e8e8e8" /><rect x="688" y="805" width="36" height="14" rx="6" fill="#c6c6c6" /><rect x="729" y="806" width="38" height="11" rx="5" fill="#d6d6d6" /><rect x="773" y="806" width="34" height="11" rx="5" fill="#eee" />
            <rect x="535" y="827" width="26" height="11" rx="5" fill="#e8e8e8" /><rect x="567" y="827" width="22" height="11" rx="5" fill="#e8e8e8" /><rect x="594" y="827" width="28" height="11" rx="5" fill="#c6c6c6" /><rect x="628" y="827" width="24" height="11" rx="5" fill="#e8e8e8" /><rect x="658" y="827" width="28" height="14" rx="6" fill="#c6c6c6" /><rect x="692" y="827" width="36" height="11" rx="5" fill="#d6d6d6" /><rect x="734" y="827" width="28" height="11" rx="5" fill="#eee" />
            <text x="533" y="875" font-size="7" font-weight="500" fill="#444">Choice</text>
            <rect x="535" y="888" width="26" height="11" rx="5" fill="#e8e8e8" /><rect x="566" y="888" width="24" height="11" rx="5" fill="#ecdffb" /><rect x="595" y="888" width="20" height="11" rx="5" fill="#e8e8e8" /><rect x="621" y="888" width="28" height="11" rx="5" fill="#c6c6c6" /><rect x="656" y="888" width="24" height="11" rx="5" fill="#d0d0d0" /><rect x="687" y="888" width="28" height="11" rx="5" fill="#eee" />
            <text x="533" y="936" font-size="7" font-weight="500" fill="#444">Action</text>
            <rect x="535" y="950" width="36" height="11" rx="5" fill="#e0e0e0" /><rect x="575" y="950" width="30" height="11" rx="5" fill="#e0e0e0" /><rect x="609" y="950" width="36" height="11" rx="5" fill="#c6c6c6" /><rect x="650" y="950" width="34" height="11" rx="5" fill="#e0e0e0" /><rect x="538" y="953" width="5" height="5" fill="#444" /><rect x="578" y="953" width="5" height="5" fill="#444" /><rect x="612" y="953" width="5" height="5" fill="#444" /><rect x="653" y="953" width="5" height="5" fill="#444" />
          </svg>
        </div>

        <!-- Chips: Outlined -->
        <div class="relative w-[133.500px] h-[155.500px] bg-[#f5f5f5] border-2 border-[#cfcfcf]">
          <span class="absolute -top-[9px] left-px flex gap-[3px]"><i class="w-[2.500px] h-[2.500px] rounded-full bg-[#333]"></i><i class="w-[2.500px] h-[2.500px] rounded-full bg-[#333]"></i><i class="w-[2.500px] h-[2.500px] rounded-full bg-[#333]"></i></span>
          <svg class="absolute inset-[-2px] w-[133px] h-[155px] blur-[0.3px]" viewBox="25 595 399 465" font-family="Roboto">
            <circle cx="406" cy="610" r="3.500" fill="#222" /><text x="51" y="627" font-size="6.500" fill="#444" font-family="DejaVu Sans Mono">Material Design</text><text x="51" y="651" font-size="18" fill="#222" font-family="DejaVu Sans Mono">Chips: Outlined</text><rect x="51" y="678" width="347" height="2" fill="#e2e2e2" />
            <text x="51" y="705" font-size="7" font-weight="500" fill="#444">Input</text>
            <rect x="52" y="720" width="42" height="11" rx="5" fill="none" stroke="#ddd" /><rect x="100" y="720" width="36" height="11" rx="5" fill="none" stroke="#ddd" /><rect x="142" y="718" width="46" height="14" rx="6" fill="#ccc" /><rect x="194" y="720" width="38" height="11" rx="5" fill="none" stroke="#ddd" /><rect x="240" y="719" width="46" height="14" rx="6" fill="#ddd" stroke="#bbb" /><rect x="292" y="720" width="40" height="11" rx="5" fill="#e6e6e6" /><rect x="340" y="720" width="44" height="11" rx="5" fill="none" stroke="#eee" />
            <rect x="52" y="741" width="36" height="11" rx="5" fill="none" stroke="#ddd" /><rect x="92" y="741" width="30" height="11" rx="5" fill="none" stroke="#ddd" /><rect x="126" y="740" width="42" height="13" rx="6" fill="#ccc" /><rect x="172" y="741" width="32" height="11" rx="5" fill="none" stroke="#ddd" /><rect x="208" y="741" width="42" height="13" rx="6" fill="#ddd" stroke="#bbb" /><rect x="254" y="741" width="40" height="11" rx="5" fill="#e6e6e6" /><rect x="300" y="741" width="36" height="11" rx="5" fill="none" stroke="#eee" />
          </svg>
        </div>

        <!-- Dialogs -->
        <div class="relative w-[133.500px] h-[155.500px] bg-[#f5f5f5] border-2 border-[#cfcfcf]">
          <span class="absolute -top-[9px] left-px flex gap-[3px]"><i class="w-[2.500px] h-[2.500px] rounded-full bg-[#333]"></i><i class="w-[2.500px] h-[2.500px] rounded-full bg-[#333]"></i><i class="w-[2.500px] h-[2.500px] rounded-full bg-[#333]"></i></span>
          <svg class="absolute inset-[-2px] w-[133px] h-[155px] blur-[0.3px]" viewBox="495 595 399 465" font-family="Roboto">
            <circle cx="876" cy="610" r="3.500" fill="#222" /><text x="520" y="627" font-size="6.500" fill="#444" font-family="DejaVu Sans Mono">Material Design</text><text x="520" y="651" font-size="18" fill="#222" font-family="DejaVu Sans Mono">Dialogs</text><rect x="520" y="678" width="347" height="2" fill="#e2e2e2" />
            <text x="520" y="705" font-size="7" font-weight="500" fill="#444">Dialogs</text>
            <rect x="524" y="730" width="108" height="60" fill="#bbb" filter="url(#soft)" /><rect x="520" y="726" width="108" height="60" fill="#fff" /><rect x="570" y="733" width="7" height="7" fill="#222" /><rect x="562" y="746" width="24" height="2" fill="#aaa" />
          </svg>
        </div>

        <!-- Image Lists -->
        <div class="relative w-[133.500px] h-[155.500px] bg-[#f5f5f5] border-2 border-[#cfcfcf]">
          <span class="absolute -top-[9px] left-px flex gap-[3px]"><i class="w-[2.500px] h-[2.500px] rounded-full bg-[#333]"></i><i class="w-[2.500px] h-[2.500px] rounded-full bg-[#333]"></i><i class="w-[2.500px] h-[2.500px] rounded-full bg-[#333]"></i></span>
          <svg class="absolute inset-[-2px] w-[133px] h-[155px] blur-[0.3px]" viewBox="964 595 399 465" font-family="Roboto">
            <circle cx="1345" cy="610" r="3.500" fill="#222" /><text x="990" y="627" font-size="6.500" fill="#444" font-family="DejaVu Sans Mono">Material Design</text><text x="990" y="651" font-size="18" fill="#222" font-family="DejaVu Sans Mono">Image Lists</text><rect x="990" y="678" width="347" height="2" fill="#e2e2e2" />
            <text x="990" y="705" font-size="7" font-weight="500" fill="#444">Gutter</text>
            <rect x="991" y="727" width="135" height="40" fill="#dedede" /><use href="#pic" x="1026" y="728" width="66" height="66" /><rect x="1157" y="727" width="135" height="40" fill="#dedede" /><use href="#pic" x="1192" y="728" width="66" height="66" />
          </svg>
        </div>

        <!-- Image Lists, second -->
        <div class="relative w-[133.500px] h-[155.500px] bg-[#f5f5f5] border-2 border-[#cfcfcf]">
          <span class="absolute -top-[9px] left-px flex gap-[3px]"><i class="w-[2.500px] h-[2.500px] rounded-full bg-[#333]"></i><i class="w-[2.500px] h-[2.500px] rounded-full bg-[#333]"></i><i class="w-[2.500px] h-[2.500px] rounded-full bg-[#333]"></i></span>
          <svg class="absolute inset-[-2px] w-[133px] h-[155px] blur-[0.3px]" viewBox="-2 -2 399 465" font-family="Roboto">
            <circle cx="380" cy="13" r="3.500" fill="#222" /><text x="24" y="30" font-size="6.500" fill="#444" font-family="DejaVu Sans Mono">Material Design</text><text x="24" y="54" font-size="18" fill="#222" font-family="DejaVu Sans Mono">Image Lists</text><rect x="24" y="81" width="347" height="2" fill="#e2e2e2" />
            <text x="24" y="108" font-size="7" font-weight="500" fill="#444">Mosaic</text>
            <rect x="24" y="130" width="60" height="40" fill="#fff" /><rect x="90" y="130" width="60" height="40" fill="#e0e0e0" /><use href="#pic" x="100" y="134" width="40" height="40" /><rect x="156" y="130" width="60" height="40" fill="#e0e0e0" />
          </svg>
        </div>

        <!-- Lists -->
        <div class="relative w-[133.500px] h-[155.500px] bg-[#f5f5f5] border-2 border-[#cfcfcf]">
          <span class="absolute -top-[9px] left-px flex gap-[3px]"><i class="w-[2.500px] h-[2.500px] rounded-full bg-[#333]"></i><i class="w-[2.500px] h-[2.500px] rounded-full bg-[#333]"></i><i class="w-[2.500px] h-[2.500px] rounded-full bg-[#333]"></i></span>
          <svg class="absolute inset-[-2px] w-[133px] h-[155px] blur-[0.3px]" viewBox="-2 -2 399 465" font-family="Roboto">
            <circle cx="380" cy="13" r="3.500" fill="#222" /><text x="24" y="30" font-size="6.500" fill="#444" font-family="DejaVu Sans Mono">Material Design</text><text x="24" y="54" font-size="18" fill="#222" font-family="DejaVu Sans Mono">Lists</text><rect x="24" y="81" width="347" height="2" fill="#e2e2e2" />
            <text x="24" y="108" font-size="7" font-weight="500" fill="#444">Single Line</text><text x="200" y="108" font-size="7" font-weight="500" fill="#444">Dense</text>
            <rect x="24" y="120" width="140" height="40" fill="#fff" /><rect x="200" y="120" width="140" height="40" fill="#fff" />
          </svg>
        </div>
      </div>
    </main>

    <!-- properties panel -->
    <aside class="w-[294px] shrink-0 flex flex-col gap-[3px] text-[#4b4b4b]">

      <section class="h-[59px] shrink-0 flex bg-[#f8f8f8]">
        <div class="w-[148px] border-r-2 border-[#ebebeb] flex items-center pl-[19px]">
          <svg class="w-[20px] h-[20px]" viewBox="0 0 20 20"><path d="M0 1h20" stroke="#c6c6c6" stroke-width="1.500" /><rect x="3" y="3" width="6" height="15" fill="#c6c6c6" /><rect x="12" y="3" width="5" height="9" fill="#c6c6c6" /></svg>
          <svg class="w-[20px] h-[20px] ml-[12px]" viewBox="0 0 20 20"><path d="M0 10h20" stroke="#c6c6c6" stroke-width="1.500" /><rect x="3" y="3" width="6" height="14" rx="1" fill="#c6c6c6" /><rect x="11" y="5" width="5" height="10" rx="1" fill="#c6c6c6" /></svg>
          <svg class="w-[20px] h-[20px] ml-[12px]" viewBox="0 0 20 20"><path d="M0 19h20" stroke="#c6c6c6" stroke-width="1.500" /><rect x="3" y="2" width="6" height="15" fill="#c6c6c6" /><rect x="12" y="8" width="5" height="9" fill="#c6c6c6" /></svg>
          <svg class="w-[15px] h-[20px] ml-[15px]" viewBox="0 0 15 20"><path d="M1 0v20M14 0v20" stroke="#c6c6c6" stroke-width="1.500" /><rect x="4.500" y="3" width="6" height="14" fill="#c6c6c6" /></svg>
        </div>
        <div class="flex items-center pl-[14px]">
          <svg class="w-[20px] h-[20px]" viewBox="0 0 20 20"><path d="M1 0v20" stroke="#c6c6c6" stroke-width="1.500" /><rect x="3" y="4" width="9" height="5" rx="1" fill="#c6c6c6" /><rect x="3" y="11" width="15" height="5" rx="1" fill="#c6c6c6" /></svg>
          <svg class="w-[15px] h-[20px] ml-[13px]" viewBox="0 0 15 20"><path d="M7.500 0v20" stroke="#c6c6c6" stroke-width="1.500" /><rect x="3" y="4" width="9" height="5" rx="1" fill="#c6c6c6" /><rect x="0" y="11" width="15" height="5" rx="1" fill="#c6c6c6" /></svg>
          <svg class="w-[20px] h-[20px] ml-[14px]" viewBox="0 0 20 20"><path d="M19 0v20" stroke="#c6c6c6" stroke-width="1.500" /><rect x="8" y="4" width="9" height="5" rx="1" fill="#c6c6c6" /><rect x="2" y="11" width="15" height="5" rx="1" fill="#c6c6c6" /></svg>
          <svg class="w-[20px] h-[16px] ml-[13px]" viewBox="0 0 20 16"><path d="M0 1h20M0 15h20" stroke="#c6c6c6" stroke-width="1.500" /><rect x="4" y="5" width="12" height="6" fill="#c6c6c6" /></svg>
        </div>
      </section>

      <section class="h-[61px] shrink-0 bg-[#f8f8f8] flex items-center pl-[15px]">
        <div class="w-[118px] h-[30px] rounded-md border-2 border-[#e3e3e3] bg-[#fafafa] flex items-center pl-[7px] text-[13.200px] text-[#3f3f3f]">
          <svg class="w-[17px] h-[17px] mr-[11px]" viewBox="0 0 17 17" fill="none" stroke="#4b4b4b" stroke-width="1.300"><rect x=".7" y=".7" width="6.500" height="6.500" rx="1" /><rect x="9.800" y=".7" width="6.500" height="6.500" rx="1" /><rect x=".7" y="9.800" width="6.500" height="6.500" rx="1" /><rect x="9.800" y="9.800" width="6.500" height="6.500" rx="1" /></svg>
          Repeat Grid
        </div>
        <div class="flex gap-[14px] ml-[29px]">
          <svg class="w-[18px] h-[18px]" viewBox="0 0 18 18"><path d="M1 1h11v5h5v11H6v-5H1z" fill="#dcdcdc" stroke="#c6c6c6" stroke-width="1.300" /></svg>
          <svg class="w-[18px] h-[18px]" viewBox="0 0 18 18" fill="none" stroke="#c6c6c6" stroke-width="1.300"><path d="M6 12H1V1h11v5" /><rect x="6" y="6" width="11" height="11" fill="#efefef" /></svg>
          <svg class="w-[18px] h-[18px]" viewBox="0 0 18 18" fill="none" stroke="#c6c6c6" stroke-width="1.300"><rect x="1" y="1" width="11" height="11" /><rect x="6" y="6" width="11" height="11" /><rect x="6" y="6" width="6" height="6" fill="#dcdcdc" /></svg>
          <svg class="w-[18px] h-[18px]" viewBox="0 0 18 18" fill="none" stroke="#c6c6c6" stroke-width="1.300"><path d="M1 1h11v5h5v11H6v-5H1z" fill="#dcdcdc" /><rect x="6" y="6" width="6" height="6" fill="#f8f8f8" /></svg>
        </div>
      </section>

      <section class="h-[166px] shrink-0 bg-[#f8f8f8]">
        <div class="h-[47px] pl-[15px] pt-[15px] flex items-start text-[12px] tracking-[1.650px] text-[#999]">
          <span class="h-[16px] leading-[16px]">COMPONENT (INSTANCE)</span>
          <svg class="w-[14px] h-[14px] ml-[8px] mt-px"><use href="#info" /></svg>
        </div>
        <div class="h-[39px] pl-[15px] pb-[4px] flex items-center text-[14.700px] text-[#444] whitespace-nowrap">
          Light
          <svg class="w-[18px] h-[18px] ml-[5px]" viewBox="0 0 24 24"><circle cx="12" cy="12" r="11.500" fill="url(#coin)" /></svg>/ Nav Drawer/1. Group/B. Bot...
        </div>
        <div class="h-[31px] bg-[#e8f3fb] pl-[15px] pr-[16px] flex items-center text-[14px]">
          <svg class="w-[16px] h-[16px] mr-[7px]" viewBox="0 0 16 16"><path d="M8 .5 15.500 8 8 15.500.5 8z" fill="#555" /><path d="M8 5 11 8 8 11 5 8z" fill="#e8f3fb" /><circle cx="8" cy="8" r="1.500" fill="#555" /></svg>
          Default State
          <svg class="w-[13px] h-[13px] ml-auto" viewBox="0 0 13 13"><path d="M9.500.5 12.500 3.500 4 12 .5 12.500 1 9z" fill="#5c5c5c" /></svg>
        </div>
        <div class="h-[31px] pl-[38px] flex items-center text-[14px]">
          <svg class="w-[16px] h-[16px] mr-[7px]" viewBox="0 0 16 16"><path d="M8 1.500 14.500 8 8 14.500 1.500 8z" fill="none" stroke="#c2c2c2" stroke-width="2" /></svg>
          Scrolled
        </div>
      </section>

      <section class="h-[195px] shrink-0 bg-[#f8f8f8] relative">
        <div class="h-[51px] pl-[15px] pr-[19px] pt-[17px] flex items-start text-[12px] tracking-[1.650px] text-[#999]">
          <span class="h-[16px] leading-[16px]">TRANSFORM</span>
          <svg class="w-[14px] h-[14px] ml-[9px] mt-px"><use href="#info" /></svg>
          <svg class="w-[18px] h-[18px] ml-auto -mt-px" viewBox="0 0 18 18" fill="none" stroke="#5c5c5c" stroke-width="1.300"><path d="M9 1 16.500 5v8.500L9 17 1.500 13.500V5zM1.500 5 9 9l7.500-4M9 9v8" /></svg>
        </div>
        <div class="pl-[15px] grid grid-cols-[100px_85px_auto] gap-y-[20px] text-[15px] text-[#444]">
          <div class="flex items-center h-[26px]"><span class="w-[18px] text-[12px] text-[#a6a6a6]">W</span><span class="w-[56px] h-[26px] leading-[26px] pl-[3px] border-b border-[#dcdcdc]">360</span></div>
          <div class="flex items-center h-[26px]"><span class="w-[15px] text-[12px] text-[#a6a6a6]">X</span><span class="w-[55px] h-[26px] leading-[26px] pl-[3px] border-b border-[#dcdcdc]">494</span></div>
          <div class="flex items-center h-[26px]">
            <svg class="w-[20px] h-[20px]" viewBox="0 0 20 20" fill="none" stroke="#5c5c5c" stroke-width="1.300"><path d="M16 4A8 8 0 1 0 18 10" /><path d="M12 3.500 17 4 17 0" /><circle cx="10" cy="10" r="1" fill="#5c5c5c" stroke="none" /></svg>
            <span class="ml-[12px] w-[42px] h-[26px] leading-[26px] pl-[3px] border-b border-[#dcdcdc]">0°</span>
          </div>
          <div class="flex items-center h-[26px]"><span class="w-[18px] text-[12px] text-[#a6a6a6]">H</span><span class="w-[56px] h-[26px] leading-[26px] pl-[3px] border-b border-[#dcdcdc]">640</span></div>
          <div class="flex items-center h-[26px]"><span class="w-[15px] text-[12px] text-[#a6a6a6]">Y</span><span class="w-[55px] h-[26px] leading-[26px] pl-[2px] border-b border-[#dcdcdc]">1202</span></div>
        </div>
        <!-- proportion lock between W and H -->
        <svg class="absolute left-[92px] top-[59px] w-[12px] h-[48px]" viewBox="0 0 12 48" fill="none"><path d="M0 .5h6.500V12M0 47.500h6.500V36" stroke="#d6d6d6" /><rect x="2.500" y="22" width="8" height="7" rx="1" fill="#b8b8b8" /><path d="M4 22v-2a2.500 2.500 0 0 1 5 0" stroke="#b8b8b8" /></svg>
        <div class="flex items-center pl-[17px] mt-[20px] h-[18px]">
          <svg class="w-[17px] h-[13px]" viewBox="0 0 17 13"><path d="M.7 1.500 6 6.500.7 11.500z" fill="none" stroke="#c9c9c9" /><path d="M8.500 0v13" stroke="#c9c9c9" stroke-dasharray="1.500 1" /><path d="M16.500 1 11 6.500l5.500 5.500z" fill="#c9c9c9" /></svg>
          <svg class="w-[14px] h-[17px] ml-[17px]" viewBox="0 0 14 17"><path d="M1.500 1h11L7 7z" fill="none" stroke="#c9c9c9" /><path d="M0 8.500h14" stroke="#c9c9c9" stroke-dasharray="1.500 1" /><path d="M7 10 13 16.500H1z" fill="#c9c9c9" /></svg>
          <svg class="w-[17px] h-[15px] ml-[51px]" viewBox="0 0 17 15"><path d="M.7 0v15M16.300 0v15" stroke="#5c5c5c" stroke-width="1.300" /><path d="M3.500 7.500 7 4.500v6zM13.500 7.500 10 4.500v6z" fill="#5c5c5c" /></svg>
          <svg class="w-[14px] h-[17px] ml-[19px]" viewBox="0 0 14 17"><path d="M0 .7h14M0 16.300h14" stroke="#5c5c5c" stroke-width="1.300" /><path d="M7 3.500 10.500 7h-7zM7 13.500 10.500 10h-7z" fill="#5c5c5c" /></svg>
          <svg class="w-[17px] h-[17px] ml-[20px]" viewBox="0 0 17 17"><rect x=".7" y=".7" width="15.600" height="15.600" rx="1" fill="none" stroke="#5c5c5c" stroke-width="1.300" /><path d="M8.500 3 10.500 5.500h-4zM8.500 14 10.500 11.500h-4zM3 8.500 5.500 6.500v4zM14 8.500 11.500 6.500v4z" fill="#5c5c5c" /></svg>
        </div>
      </section>

      <section class="h-[139px] shrink-0 bg-[#f8f8f8]">
        <div class="h-[58px] pl-[15px] pt-[17px] flex items-start text-[12px] tracking-[1.650px] text-[#999]">
          <span class="h-[16px] leading-[16px]">LAYOUT</span>
          <svg class="w-[14px] h-[14px] ml-[10px] mt-px"><use href="#info" /></svg>
        </div>
        <div class="h-[28px] pl-[15px] flex items-center justify-between w-[275px] text-[15px] text-[#bdbdbd]">
          Responsive Resize
          <span class="relative w-[34px] h-[18px] rounded-full bg-[#bcbcbc]"><span class="absolute right-[2px] top-[2px] w-[14px] h-[14px] rounded-full bg-white"></span></span>
        </div>
        <div class="ml-[15px] mt-[8px] w-[267px] h-[31px] rounded-[3px] border-2 border-[#e3e3e3] bg-[#fbfbfb] grid grid-cols-2 text-[13.200px]">
          <div class="flex items-center justify-center text-[#1473e6] border-r-2 border-[#e3e3e3]">Auto</div>
          <div class="flex items-center justify-center text-[#333]">Manual</div>
        </div>
      </section>

      <section class="h-[242px] shrink-0 bg-[#f8f8f8]">
        <div class="h-[51px] pl-[15px] pt-[14px] text-[12px] tracking-[1.650px] text-[#999] leading-[16px]">APPEARANCE</div>
        <div class="h-[38px] pl-[16px] flex items-center">
          <svg class="w-[16px] h-[16px]" viewBox="0 0 16 16"><rect x=".6" y=".6" width="14.800" height="14.800" rx="1" fill="#f4f4f4" stroke="#777" stroke-width="1.200" /><path d="M2 2h3v3H2zM8 2h3v3H8zM5 5h3v3H5zM11 5h3v3h-3zM2 8h3v3H2zM8 8h3v3H8zM5 11h3v3H5zM11 11h3v3h-3z" fill="#bcbcbc" /></svg>
          <span class="ml-[10px] w-[54px] h-[28px] leading-[28px] border-b border-[#dcdcdc] text-[15px] text-[#444]">100%</span>
          <span class="relative ml-[5px] w-[172px] h-[3px] rounded-full bg-[#0d7eea]"><span class="absolute -right-[9px] -top-[8px] w-[19px] h-[19px] rounded-full bg-white border border-[#e2e2e2] shadow-sm"></span></span>
        </div>
        <div class="ml-[15px] mt-[10px] w-[258px] h-[30px] rounded-[4px] border-2 border-[#e6e6e6] bg-[#fbfbfb] flex items-center justify-between pl-[12px] pr-[11px] text-[15px] text-[#3a3a3a]">
          Pass Through
          <svg class="w-[11px] h-[7px]" viewBox="0 0 11 7"><path d="M1 1l4.500 4.500L10 1" fill="none" stroke="#4b4b4b" stroke-width="1.500" /></svg>
        </div>
        <div class="mt-[17px] h-[32px] pl-[17px] pr-[18px] flex items-center text-[14px]">
          <span class="w-[15px] h-[15px] rounded-[2px] bg-[#5c5c5c] flex items-center justify-center"><span class="w-[9px] h-[2px] bg-white"></span></span>
          <span class="w-[31px] h-[15px] ml-[15px] rounded-[2px] border-2 border-[#dadada] bg-[#f4f4f4] flex items-center justify-center"><span class="w-[9px] h-[1.500px] bg-[#cfcfcf]"></span></span>
          <span class="ml-[14px]">Fill</span>
          <svg class="w-[20px] h-[20px] ml-auto"><use href="#dropper" /></svg>
        </div>
        <div class="mt-[14px] h-[32px] pl-[17px] pr-[18px] flex items-center text-[14px]">
          <span class="w-[15px] h-[15px] rounded-[2px] border-[1.500px] border-[#666] bg-[#fbfbfb]"></span>
          <span class="w-[31px] h-[15px] ml-[15px] rounded-[2px] border border-[#555] bg-[#666]"></span>
          <span class="ml-[14px]">Border</span>
          <svg class="w-[20px] h-[20px] ml-auto"><use href="#dropper" /></svg>
        </div>
      </section>

      <section class="h-[54px] shrink-0 bg-[#f8f8f8] pl-[17px] flex items-center text-[14px]">
        <span class="w-[15px] h-[15px] rounded-[2px] border-[1.500px] border-[#666] bg-[#fbfbfb] mr-[14px]"></span>
        Mark for Export
      </section>

      <section class="flex-1 bg-[#f8f8f8]"></section>
    </aside>
  </div>
</div>
</body>
</html>
